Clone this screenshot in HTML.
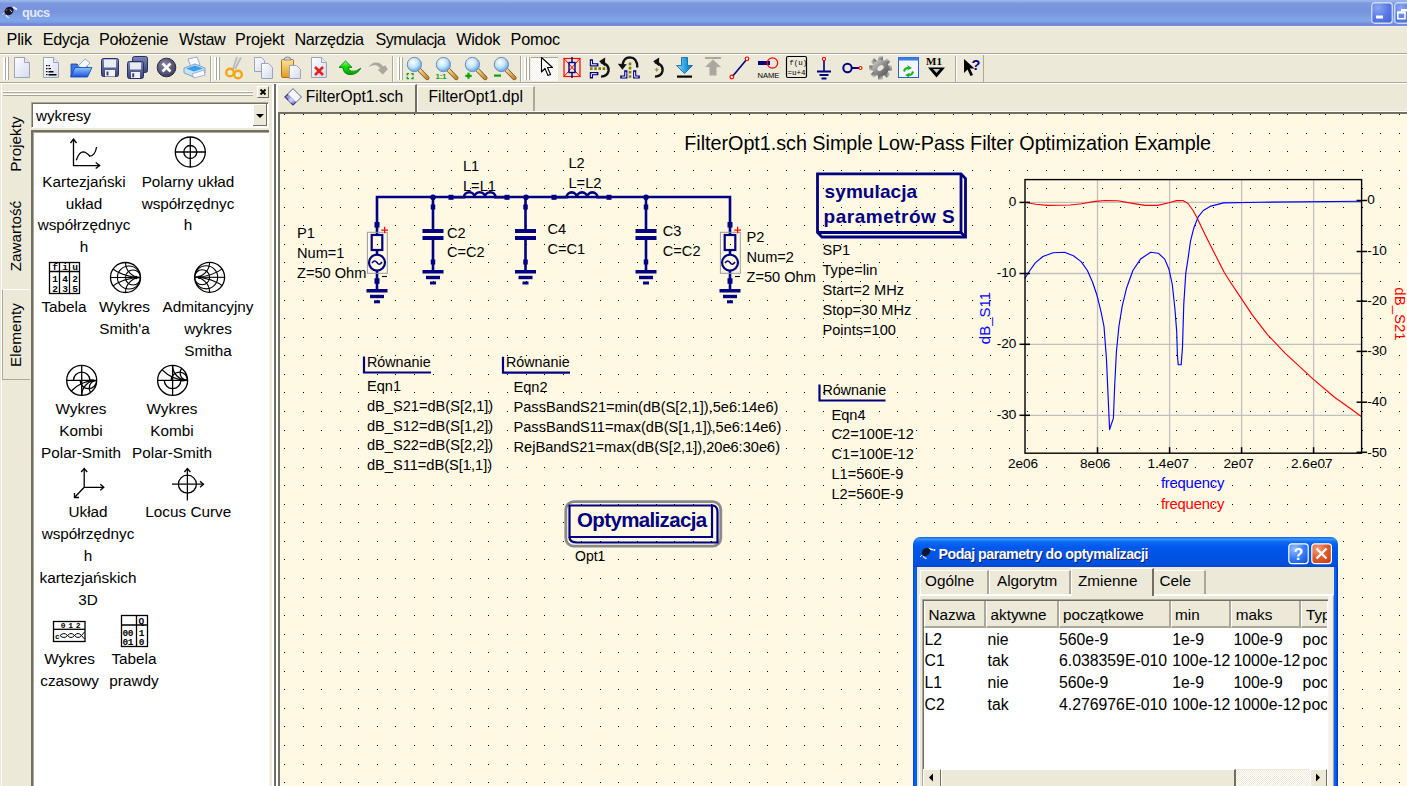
<!DOCTYPE html>
<html><head><meta charset="utf-8"><title>qucs</title>
<style>
html,body{margin:0;padding:0;}
body{width:1407px;height:786px;overflow:hidden;position:relative;background:#ECE9D8;font-family:"Liberation Sans", sans-serif;}
.t{position:absolute;white-space:pre;line-height:1;}
.r{position:absolute;}
svg{position:absolute;overflow:visible;}
</style></head><body>
<div class="r" style="left:0px;top:0px;width:1407px;height:26px;background:linear-gradient(to bottom,#97B0E8 0px,#9DB8EA 1px,#86A6E6 2px,#7A96DF 4px,#7994DE 12px,#7C9EE3 16px,#80A7E7 20px,#7F9EE4 22px,#7089DA 24px,#6E88D8 26px);"></div><svg style="left:0;top:0" width="20" height="26" viewBox="0 0 20 26">
<path d="M2.5 14.5 L6 11" stroke="#E8ECF8" stroke-width="1"/>
<path d="M13 7 L17 9.5" stroke="#F0F0F8" stroke-width="1.5"/>
<ellipse cx="9" cy="11" rx="4.8" ry="4" fill="#15152a" transform="rotate(-35 9 11)"/>
<path d="M6 15 Q7.5 18 9 17.5" stroke="#E8ECF8" stroke-width="1.3" fill="none"/>
<circle cx="6.5" cy="10" r="0.9" fill="#c03030"/>
<path d="M10 9.5 L12 12" stroke="#d8dcf0" stroke-width="1"/>
</svg><div class="t" style="left:22.1px;top:7.3px;font-size:12.8px;color:#E2E8F6;font-weight:bold;letter-spacing:-0.584px">qucs</div><svg style="left:1371px;top:2px" width="22" height="22" viewBox="0 0 22 22">
<defs><radialGradient id="tbg1371" cx="0.3" cy="0.25" r="0.9"><stop offset="0" stop-color="#8CA6EE"/><stop offset="0.55" stop-color="#5A7BE6"/><stop offset="1" stop-color="#4668D8"/></radialGradient></defs>
<rect x="0.75" y="0.75" width="20.5" height="20.5" rx="3" fill="url(#tbg1371)" stroke="#D0DAF4" stroke-width="1.3"/><rect x="5" y="13.5" width="7" height="3" fill="#fff"/></svg><svg style="left:1394px;top:2px" width="22" height="22" viewBox="0 0 22 22">
<defs><radialGradient id="tbg1394" cx="0.3" cy="0.25" r="0.9"><stop offset="0" stop-color="#8CA6EE"/><stop offset="0.55" stop-color="#5A7BE6"/><stop offset="1" stop-color="#4668D8"/></radialGradient></defs>
<rect x="0.75" y="0.75" width="20.5" height="20.5" rx="3" fill="url(#tbg1394)" stroke="#D0DAF4" stroke-width="1.3"/><rect x="7" y="7" width="9" height="2.3" fill="#fff"/><rect x="3.8" y="10.2" width="7.2" height="6.5" fill="none" stroke="#fff" stroke-width="1.6"/><rect x="3.2" y="9.6" width="8.2" height="2" fill="#fff"/></svg><div class="r" style="left:0px;top:26px;width:1407px;height:1px;background:#F4F1E2;"></div><div class="t" style="left:6.5px;top:31.4px;font-size:16.2px;color:#000;letter-spacing:-0.163px">Plik</div><div class="t" style="left:42.7px;top:31.4px;font-size:16.2px;color:#000;letter-spacing:-0.357px">Edycja</div><div class="t" style="left:99.0px;top:31.4px;font-size:16.2px;color:#000;letter-spacing:-0.212px">Położenie</div><div class="t" style="left:179.0px;top:31.4px;font-size:16.2px;color:#000;letter-spacing:-0.468px">Wstaw</div><div class="t" style="left:235.0px;top:31.4px;font-size:16.2px;color:#000;letter-spacing:-0.147px">Projekt</div><div class="t" style="left:294.6px;top:31.4px;font-size:16.2px;color:#000;letter-spacing:-0.422px">Narzędzia</div><div class="t" style="left:375.6px;top:31.4px;font-size:16.2px;color:#000;letter-spacing:-0.571px">Symulacja</div><div class="t" style="left:456.2px;top:31.4px;font-size:16.2px;color:#000;letter-spacing:-0.22px">Widok</div><div class="t" style="left:510.6px;top:31.4px;font-size:16.2px;color:#000;letter-spacing:-0.197px">Pomoc</div><div class="r" style="left:0px;top:53px;width:1407px;height:1px;background:#ACA899;"></div><div class="r" style="left:0px;top:54px;width:1407px;height:1px;background:#FFFFFF;"></div><div class="r" style="left:0px;top:82px;width:1407px;height:1px;background:#ACA899;"></div><div class="r" style="left:0px;top:83px;width:1407px;height:1px;background:#FFFFFF;"></div><div class="r" style="left:210px;top:56px;width:1px;height:26px;background:#ACA899;"></div><div class="r" style="left:211px;top:56px;width:1px;height:26px;background:#FFFFFF;"></div><div class="r" style="left:392px;top:56px;width:1px;height:26px;background:#ACA899;"></div><div class="r" style="left:393px;top:56px;width:1px;height:26px;background:#FFFFFF;"></div><div class="r" style="left:520px;top:56px;width:1px;height:26px;background:#ACA899;"></div><div class="r" style="left:521px;top:56px;width:1px;height:26px;background:#FFFFFF;"></div><div class="r" style="left:955px;top:56px;width:1px;height:26px;background:#ACA899;"></div><div class="r" style="left:956px;top:56px;width:1px;height:26px;background:#FFFFFF;"></div><div class="r" style="left:983px;top:55px;width:1px;height:27px;background:#ACA899;"></div><div class="r" style="left:3px;top:57px;width:2px;height:23px;background:#FFFFFF;"></div><div class="r" style="left:5px;top:57px;width:1px;height:23px;background:#ACA899;"></div><div class="r" style="left:6px;top:57px;width:2px;height:23px;background:#FFFFFF;"></div><div class="r" style="left:8px;top:57px;width:1px;height:23px;background:#ACA899;"></div><div class="r" style="left:214px;top:57px;width:2px;height:23px;background:#FFFFFF;"></div><div class="r" style="left:216px;top:57px;width:1px;height:23px;background:#ACA899;"></div><div class="r" style="left:217px;top:57px;width:2px;height:23px;background:#FFFFFF;"></div><div class="r" style="left:219px;top:57px;width:1px;height:23px;background:#ACA899;"></div><div class="r" style="left:397px;top:57px;width:2px;height:23px;background:#FFFFFF;"></div><div class="r" style="left:399px;top:57px;width:1px;height:23px;background:#ACA899;"></div><div class="r" style="left:400px;top:57px;width:2px;height:23px;background:#FFFFFF;"></div><div class="r" style="left:402px;top:57px;width:1px;height:23px;background:#ACA899;"></div><div class="r" style="left:524px;top:57px;width:2px;height:23px;background:#FFFFFF;"></div><div class="r" style="left:526px;top:57px;width:1px;height:23px;background:#ACA899;"></div><div class="r" style="left:527px;top:57px;width:2px;height:23px;background:#FFFFFF;"></div><div class="r" style="left:529px;top:57px;width:1px;height:23px;background:#ACA899;"></div><svg style="left:0;top:0" width="0" height="0"><defs>
<linearGradient id="gpaper" x1="0" y1="0" x2="1" y2="1"><stop offset="0" stop-color="#FFFFFF"/><stop offset="1" stop-color="#D4DAEC"/></linearGradient>
<linearGradient id="gfold" x1="0" y1="0" x2="0" y2="1"><stop offset="0" stop-color="#8EC8FF"/><stop offset="1" stop-color="#1A50D8"/></linearGradient>
<linearGradient id="gdisk" x1="0" y1="0" x2="0" y2="1"><stop offset="0" stop-color="#7A86B8"/><stop offset="1" stop-color="#3A4478"/></linearGradient>
<radialGradient id="glens" cx="0.4" cy="0.35" r="0.6"><stop offset="0" stop-color="#FFFFFF"/><stop offset="0.6" stop-color="#BFE2FA"/><stop offset="1" stop-color="#6FB0E8"/></radialGradient>
<linearGradient id="ghandle" x1="0" y1="0" x2="1" y2="1"><stop offset="0" stop-color="#F8D890"/><stop offset="1" stop-color="#C88A20"/></linearGradient>
<linearGradient id="gclip" x1="0" y1="0" x2="0" y2="1"><stop offset="0" stop-color="#FBE49A"/><stop offset="1" stop-color="#E09A20"/></linearGradient>
<radialGradient id="gclose" cx="0.4" cy="0.35" r="0.7"><stop offset="0" stop-color="#8A8AA8"/><stop offset="1" stop-color="#3A3A58"/></radialGradient>
<linearGradient id="gdown" x1="0" y1="0" x2="1" y2="0"><stop offset="0" stop-color="#9AE0FF"/><stop offset="0.5" stop-color="#2AA8E8"/><stop offset="1" stop-color="#0870B8"/></linearGradient>
<linearGradient id="ggear" x1="0" y1="0" x2="1" y2="1"><stop offset="0" stop-color="#D8D8D8"/><stop offset="0.5" stop-color="#8A8A8A"/><stop offset="1" stop-color="#505050"/></linearGradient>
</defs></svg><svg style="left:13px;top:56px" width="24" height="24" viewBox="0 0 24 24"><path d="M1.5 1.5 H11.5 L16.5 6.5 V21.5 H1.5 Z" fill="url(#gpaper)" stroke="#9CA4BC" stroke-width="1"/><path d="M11.5 1.5 V6.5 H16.5" fill="#E4E8F4" stroke="#9CA4BC" stroke-width="1"/></svg><svg style="left:42px;top:56px" width="24" height="24" viewBox="0 0 24 24"><path d="M1.5 1.5 H11.5 L16.5 6.5 V21.5 H1.5 Z" fill="url(#gpaper)" stroke="#9CA4BC" stroke-width="1"/><path d="M11.5 1.5 V6.5 H16.5" fill="#E4E8F4" stroke="#9CA4BC" stroke-width="1"/><g fill="#000"><rect x="4" y="9" width="1.5" height="1.2"/><rect x="6.5" y="9" width="1.5" height="1.2"/><rect x="4" y="12" width="1.5" height="1.2"/><rect x="6.5" y="12" width="2.5" height="1.2"/><rect x="4" y="15" width="1.5" height="1.2"/><rect x="6.5" y="15" width="5" height="1.5"/><rect x="4" y="18" width="1.5" height="1.2"/><rect x="6.5" y="18" width="8" height="1.5"/></g></svg><svg style="left:69px;top:56px" width="24" height="24" viewBox="0 0 24 24"><path d="M2 8 H8 L10 10 H18 V20 H2 Z" fill="#3A78E0" stroke="#1A40A0" stroke-width="0.8"/><path d="M9 10 L16 3 L21 7 L15 13 Z" fill="#F4F6FC" stroke="#8090B0" stroke-width="0.7"/><path d="M1.5 21 L6 11.5 H23 L18.5 21 Z" fill="url(#gfold)" stroke="#1040B0" stroke-width="0.8"/></svg><svg style="left:100px;top:56px" width="24" height="24" viewBox="0 0 24 24"><rect x="1.5" y="2.5" width="17" height="18" rx="2" fill="url(#gdisk)" stroke="#2A3060" stroke-width="1"/><rect x="4" y="3.5" width="12" height="8" fill="#E8ECF4"/><rect x="5" y="14" width="10" height="6.5" fill="#F0F2F8"/><rect x="6.5" y="15.5" width="2" height="4" fill="#404870"/></svg><svg style="left:126px;top:56px" width="24" height="24" viewBox="0 0 24 24"><rect x="6.5" y="0.5" width="15" height="16" rx="2" fill="url(#gdisk)" stroke="#2A3060" stroke-width="1"/><rect x="1.5" y="5.5" width="16" height="17" rx="2" fill="url(#gdisk)" stroke="#2A3060" stroke-width="1"/><rect x="4" y="6.5" width="11" height="7" fill="#E8ECF4"/><rect x="5" y="16" width="9" height="6" fill="#F0F2F8"/><rect x="6.2" y="17.3" width="2" height="4" fill="#404870"/></svg><svg style="left:156px;top:56px" width="24" height="24" viewBox="0 0 24 24"><circle cx="10.5" cy="11.5" r="9.3" fill="url(#gclose)" stroke="#2A2A40" stroke-width="1"/><path d="M6.5 7.5 L14.5 15.5 M14.5 7.5 L6.5 15.5" stroke="#FFFFFF" stroke-width="2.6"/></svg><svg style="left:183px;top:56px" width="24" height="24" viewBox="0 0 24 24"><path d="M5 3 L14 1 L17 9 L8 11 Z" fill="#F8FAFF" stroke="#8898C0" stroke-width="0.8"/><path d="M1 12 L12 8 L22 12 V17 L11 21 L1 17 Z" fill="#C8E0F8" stroke="#6890C8" stroke-width="0.8"/><path d="M3 12.5 L12 9.5 L20 12.5 L11 15.5 Z" fill="#38A0E8"/><path d="M9 18 L21 14 L22 19 L11 22 Z" fill="#F8FAFF" stroke="#8898C0" stroke-width="0.7"/></svg><svg style="left:225px;top:56px" width="24" height="24" viewBox="0 0 24 24"><path d="M10 13 L16 1.5 M8 13 L12 1" stroke="#B8B8C8" stroke-width="1.8"/><circle cx="5" cy="16.5" r="3.8" fill="none" stroke="#F0A818" stroke-width="2.4"/><circle cx="13" cy="18.5" r="3.8" fill="none" stroke="#F0A818" stroke-width="2.4"/></svg><svg style="left:253px;top:56px" width="24" height="24" viewBox="0 0 24 24"><path d="M1.5 1.5 H8.5 L11.5 4.5 V15.5 H1.5 Z" fill="url(#gpaper)" stroke="#9CA4BC"/><path d="M8.5 7.5 H15.5 L19.5 11.5 V22.5 H8.5 Z" fill="url(#gpaper)" stroke="#9CA4BC"/></svg><svg style="left:280px;top:56px" width="24" height="24" viewBox="0 0 24 24"><rect x="1.5" y="3.5" width="12" height="18" rx="1" fill="url(#gclip)" stroke="#B07010"/><path d="M4 4 Q4 1 7.5 1 Q11 1 11 4 Z" fill="#D8D8E0" stroke="#888"/><path d="M9.5 9.5 H16.5 L20.5 13.5 V22.5 H9.5 Z" fill="url(#gpaper)" stroke="#9CA4BC"/></svg><svg style="left:310px;top:56px" width="24" height="24" viewBox="0 0 24 24"><path d="M1.5 1.5 H11.5 L16.5 6.5 V21.5 H1.5 Z" fill="url(#gpaper)" stroke="#9CA4BC" stroke-width="1"/><path d="M11.5 1.5 V6.5 H16.5" fill="#E4E8F4" stroke="#9CA4BC" stroke-width="1"/><path d="M5 11 L13 19 M13 11 L5 19" stroke="#E82020" stroke-width="2.6"/></svg><svg style="left:338px;top:56px" width="24" height="24" viewBox="0 0 24 24"><defs><linearGradient id="gundo" x1="0" y1="0" x2="0" y2="1"><stop offset="0" stop-color="#90FF90"/><stop offset="0.4" stop-color="#10E010"/><stop offset="1" stop-color="#00A000"/></linearGradient></defs><path d="M7.6 5 L1 11.4 H4.8 Q5.5 18.8 13 18.6 Q19.5 18 22.8 12.2 Q18 16.2 13.5 15.2 Q10.5 14.5 10.2 11.4 H14 Z" fill="url(#gundo)" stroke="#008000" stroke-width="0.9" stroke-linejoin="round"/></svg><svg style="left:366px;top:56px" width="24" height="24" viewBox="0 0 24 24"><path d="M1.4 12 Q6 5 12 6.3 Q15.5 7 17 10 L19.5 9 L22.2 13.3 L16.8 19 L11 13.5 L13.8 12.5 Q12 9.5 9 9.5 Q5 9.6 1.4 12 Z" fill="#ACA899" stroke="#FFFFFF" stroke-width="0.5"/></svg><svg style="left:406px;top:56px" width="24" height="24" viewBox="0 0 24 24"><path d="M13.8 14.3 L21.3 22" stroke="#7A5A30" stroke-width="4.4" stroke-linecap="round"/><path d="M13.8 14.3 L21.3 22" stroke="url(#ghandle)" stroke-width="2.8" stroke-linecap="round"/><circle cx="8.4" cy="8.5" r="7.1" fill="url(#glens)" stroke="#7088B8" stroke-width="1"/><path d="M1.2 19.5 V17.6 H3 M5.2 17.6 H7 V19.5 M7 20.8 V22.6 H5.2 M3 22.6 H1.2 V20.8" stroke="#10A010" stroke-width="1.3" fill="none"/></svg><svg style="left:435px;top:56px" width="24" height="24" viewBox="0 0 24 24"><path d="M13.8 14.3 L21.3 22" stroke="#7A5A30" stroke-width="4.4" stroke-linecap="round"/><path d="M13.8 14.3 L21.3 22" stroke="url(#ghandle)" stroke-width="2.8" stroke-linecap="round"/><circle cx="8.4" cy="8.5" r="7.1" fill="url(#glens)" stroke="#7088B8" stroke-width="1"/><text x="0.5" y="23" font-family="Liberation Sans" font-weight="bold" font-size="8" fill="#10A010" letter-spacing="-0.3">1:1</text></svg><svg style="left:464px;top:56px" width="24" height="24" viewBox="0 0 24 24"><path d="M13.8 14.3 L21.3 22" stroke="#7A5A30" stroke-width="4.4" stroke-linecap="round"/><path d="M13.8 14.3 L21.3 22" stroke="url(#ghandle)" stroke-width="2.8" stroke-linecap="round"/><circle cx="8.4" cy="8.5" r="7.1" fill="url(#glens)" stroke="#7088B8" stroke-width="1"/><path d="M4.5 16.8 V22.8 M1.3 19.8 H7.7" stroke="#10A010" stroke-width="2.3"/></svg><svg style="left:493px;top:56px" width="24" height="24" viewBox="0 0 24 24"><path d="M13.8 14.3 L21.3 22" stroke="#7A5A30" stroke-width="4.4" stroke-linecap="round"/><path d="M13.8 14.3 L21.3 22" stroke="url(#ghandle)" stroke-width="2.8" stroke-linecap="round"/><circle cx="8.4" cy="8.5" r="7.1" fill="url(#glens)" stroke="#7088B8" stroke-width="1"/><path d="M1 19.6 H8" stroke="#10A010" stroke-width="2.2"/></svg><div class="r" style="left:531px;top:57px;width:27px;height:24px;background:repeating-conic-gradient(#F4F2EA 0 25%, #FFFFFF 0 50%) 0 0/2px 2px;"></div><div class="r" style="left:531px;top:57px;width:27px;height:1px;background:#ACA899;"></div><svg style="left:539px;top:56px" width="24" height="24" viewBox="0 0 24 24"><path d="M2.5 1.5 L2.5 16 L6 12.5 L9 19.5 L11.5 18.5 L8.5 11.5 L13.5 11.5 Z" fill="#FFFFFF" stroke="#000" stroke-width="1.1" stroke-linejoin="round"/></svg><svg style="left:563px;top:56px" width="24" height="24" viewBox="0 0 24 24"><rect x="1" y="2.5" width="16" height="18" fill="none" stroke="#FF0000" stroke-width="1.2"/><path d="M1 2.5 L17 20.5 M17 2.5 L1 20.5" stroke="#FF0000" stroke-width="1"/><rect x="6" y="6.5" width="6" height="10" fill="none" stroke="#000080" stroke-width="1.4"/><path d="M9 1 V6.5 M9 16.5 V22" stroke="#000080" stroke-width="1.4"/></svg><svg style="left:586px;top:56px" width="24" height="24" viewBox="0 0 24 24"><path d="M5.4 4.8 V8.8 H10.8" fill="none" stroke="#000080" stroke-width="3.2" stroke-linecap="square"/><path d="M5.4 4.8 V8.8 H10.8" fill="none" stroke="#FFFFFF" stroke-width="1"/><path d="M5.4 21 V17.7 H10.8" fill="none" stroke="#000080" stroke-width="3.2" stroke-linecap="square"/><path d="M5.4 21 V17.7 H10.8" fill="none" stroke="#FFFFFF" stroke-width="1"/><path d="M4 12.6 H21" stroke="#808000" stroke-width="2.6" stroke-dasharray="2.6 1.6"/><path d="M14.8 6.2 Q23.5 8.5 22.5 15 Q21.5 20.3 15 20.6" fill="none" stroke="#111" stroke-width="2.4"/><path d="M13.2 5.3 L19.2 1.5 L18.8 10.2 Z" fill="#111"/></svg><svg style="left:617px;top:56px" width="24" height="24" viewBox="0 0 24 24"><path d="M4.8 21 H8.8 V15.8" fill="none" stroke="#000080" stroke-width="3.2" stroke-linecap="square"/><path d="M4.8 21 H8.8 V15.8" fill="none" stroke="#FFFFFF" stroke-width="1"/><path d="M17.7 15.8 V21 H21.2" fill="none" stroke="#000080" stroke-width="3.2" stroke-linecap="square"/><path d="M17.7 15.8 V21 H21.2" fill="none" stroke="#FFFFFF" stroke-width="1"/><path d="M13 6.6 V22.4" stroke="#808000" stroke-width="2.6" stroke-dasharray="2.6 1.6"/><path d="M20.3 11.4 Q20.3 1.6 12.6 1.4 Q7 1.4 5.6 8.5" fill="none" stroke="#111" stroke-width="2.4"/><path d="M5.4 13.8 L0.8 7.8 L9.8 8.2 Z" fill="#111"/></svg><svg style="left:651px;top:56px" width="24" height="24" viewBox="0 0 24 24"><path d="M3.8 6.2 Q12.5 8.5 11.5 15 Q10.5 20.3 4 20.6" fill="none" stroke="#111" stroke-width="2.4"/><path d="M2.2 5.3 L8.2 1.5 L7.8 10.2 Z" fill="#111"/><path d="M5.7 11.3 L6.5 13 L8.2 13.8 L6.5 14.6 L5.7 16.3 L4.9 14.6 L3.2 13.8 L4.9 13 Z" fill="#A09040"/></svg><svg style="left:675px;top:56px" width="24" height="24" viewBox="0 0 24 24"><path d="M6.5 1.5 H12.5 V9.5 H17.5 L9.5 17.5 L1.5 9.5 H6.5 Z" fill="url(#gdown)" stroke="#0860A0" stroke-width="0.8"/><rect x="2" y="19.5" width="15" height="2.2" fill="#000"/></svg><svg style="left:704px;top:56px" width="24" height="24" viewBox="0 0 24 24"><rect x="1" y="1" width="16" height="2" fill="#A8A89C"/><path d="M9 3.5 L17 11 H12.5 V19.5 H5.5 V11 H1 Z" fill="#A8A89C" stroke="#C8C8C0" stroke-width="0.5"/></svg><svg style="left:729px;top:56px" width="24" height="24" viewBox="0 0 24 24"><path d="M3 21 L18 3" stroke="#000080" stroke-width="1.6"/><circle cx="2.8" cy="21" r="1.8" fill="#fff" stroke="#FF0000" stroke-width="1.2"/><circle cx="18" cy="2.8" r="1.8" fill="#fff" stroke="#FF0000" stroke-width="1.2"/></svg><svg style="left:757px;top:56px" width="24" height="24" viewBox="0 0 24 24"><rect x="1" y="5" width="12" height="4" fill="#000080"/><circle cx="15.5" cy="7" r="5.2" fill="none" stroke="#FF0000" stroke-width="1.2"/><text x="0.5" y="21.8" font-family="Liberation Sans" font-size="7.6" fill="#000">NAME</text></svg><svg style="left:785px;top:56px" width="24" height="24" viewBox="0 0 24 24"><rect x="1.5" y="0.5" width="20" height="21" rx="1.5" fill="none" stroke="#000" stroke-width="1.2"/><text x="4.2" y="9" font-family="Liberation Mono" font-size="7.5" fill="#000">f(u)</text><text x="2.6" y="18.5" font-family="Liberation Mono" font-size="7.5" fill="#000">=u+4</text></svg><svg style="left:816px;top:56px" width="24" height="24" viewBox="0 0 24 24"><path d="M8 5 V15" stroke="#000080" stroke-width="1.6"/><circle cx="8" cy="3" r="1.6" fill="#fff" stroke="#FF0000" stroke-width="1.1"/><path d="M1 15.5 H15 M3.5 19 H12.5 M5.5 22.5 H10.5" stroke="#000080" stroke-width="1.8"/></svg><svg style="left:842px;top:56px" width="24" height="24" viewBox="0 0 24 24"><circle cx="5.5" cy="12" r="4.2" fill="none" stroke="#000080" stroke-width="2"/><path d="M9.7 12 H17" stroke="#000080" stroke-width="2"/><circle cx="18.5" cy="12" r="1.5" fill="#fff" stroke="#FF0000" stroke-width="1.1"/></svg><svg style="left:869px;top:56px" width="24" height="24" viewBox="0 0 24 24"><rect x="9" y="0.5" width="5" height="5" fill="url(#ggear)" transform="rotate(0 11.5 12)"/><rect x="9" y="0.5" width="5" height="5" fill="url(#ggear)" transform="rotate(45 11.5 12)"/><rect x="9" y="0.5" width="5" height="5" fill="url(#ggear)" transform="rotate(90 11.5 12)"/><rect x="9" y="0.5" width="5" height="5" fill="url(#ggear)" transform="rotate(135 11.5 12)"/><rect x="9" y="0.5" width="5" height="5" fill="url(#ggear)" transform="rotate(180 11.5 12)"/><rect x="9" y="0.5" width="5" height="5" fill="url(#ggear)" transform="rotate(225 11.5 12)"/><rect x="9" y="0.5" width="5" height="5" fill="url(#ggear)" transform="rotate(270 11.5 12)"/><rect x="9" y="0.5" width="5" height="5" fill="url(#ggear)" transform="rotate(315 11.5 12)"/><circle cx="11.5" cy="12" r="8.3" fill="url(#ggear)"/><ellipse cx="11.5" cy="12" rx="3.6" ry="2.3" fill="#ECE9D8" transform="rotate(-40 11.5 12)"/></svg><svg style="left:897px;top:56px" width="24" height="24" viewBox="0 0 24 24"><rect x="1.5" y="1.5" width="20" height="20" fill="#F4F6FC" stroke="#2060D0" stroke-width="1"/><rect x="1.5" y="1.5" width="20" height="3" fill="#3A80E8"/><path d="M6 15 Q7 11 11 11 L10 9 L15 12 L10 14.5 L11 13 Q8.5 13 8 16 Z M17 16 Q16 20 12 20 L13 22 L8 19 L13 16.5 L12 18 Q14.5 18 15 15 Z" fill="#20B020"/></svg><svg style="left:926px;top:56px" width="24" height="24" viewBox="0 0 24 24"><text x="0" y="8.5" font-family="Liberation Serif" font-weight="bold" font-size="11" fill="#000">M1</text><path d="M2 11.5 H19 L10.5 21.5 Z" fill="#000"/><path d="M7 13 H14 L10.5 17 Z" fill="#C8C8C8"/></svg><svg style="left:962px;top:56px" width="24" height="24" viewBox="0 0 24 24"><path d="M2 3 L2 17 L5.5 13.5 L8.5 20 L11 19 L8 12.5 L12.5 12.5 Z" fill="#000"/><text x="9.6" y="14" font-family="Liberation Sans" font-weight="bold" font-size="14.5" fill="#000080">?</text></svg><div class="r" style="left:0px;top:84px;width:275px;height:702px;background:#ECE9D8;"></div><div class="r" style="left:1px;top:84px;width:1px;height:702px;background:#FFFFFF;"></div><div class="r" style="left:3px;top:91px;width:250px;height:1px;background:#FFFFFF;"></div><div class="r" style="left:3px;top:92px;width:250px;height:1px;background:#ACA899;"></div><div class="r" style="left:3px;top:94px;width:250px;height:1px;background:#FFFFFF;"></div><div class="r" style="left:3px;top:95px;width:250px;height:1px;background:#ACA899;"></div><div class="r" style="left:257px;top:86px;width:10px;height:10px;border:1px solid;border-color:#FFFFFF #716F64 #716F64 #FFFFFF;background:#ECE9D8"></div><svg style="left:257px;top:86px" width="12" height="12" viewBox="0 0 12 12"><path d="M3.5 3.5 L8.5 8.5 M8.5 3.5 L3.5 8.5" stroke="#000" stroke-width="1.8"/></svg><div class="r" style="left:271px;top:84px;width:1px;height:702px;background:#ECE9D8;"></div><div class="r" style="left:272px;top:84px;width:2px;height:702px;background:#FFFFFF;"></div><div class="r" style="left:274px;top:84px;width:2px;height:702px;background:#716F64;"></div><div class="r" style="left:276px;top:84px;width:2px;height:702px;background:#FFFFFF;"></div><div class="r" style="left:31px;top:102px;width:236px;height:24px;border:1px solid;border-color:#ACA899 #FFFFFF #FFFFFF #ACA899;background:#FFFFFF;box-shadow:inset 1px 1px 0 #716F64"></div><div class="r" style="left:253px;top:104px;width:14px;height:22px;background:#ECE9D8;box-shadow:inset -1px -1px 0 #716F64, inset 1px 1px 0 #FFFFFF"></div><svg style="left:253px;top:104px" width="15" height="22" viewBox="0 0 15 22"><path d="M3 10 H11 L7 14 Z" fill="#000"/></svg><div class="t" style="left:36.0px;top:107.6px;font-size:15.2px;color:#000">wykresy</div><div class="r" style="left:31px;top:130px;width:238px;height:660px;background:#FFFFFF;border-left:2px solid #716F64;border-top:2px solid #716F64;box-sizing:border-box;box-shadow:inset 1px 1px 0 #ACA899"></div><div class="r" style="left:269px;top:130px;width:1px;height:656px;background:#F4F2E8;"></div><div class="r" style="left:270px;top:130px;width:2px;height:656px;background:#ECE9D8;"></div><div class="r" style="left:2px;top:289px;width:28px;height:91px;background:#ECE9D8;border-left:1px solid #ACA899;border-bottom:1px solid #ACA899;border-top:1px solid #FFFFFF;box-sizing:border-box"></div><div class="t" style="left:16px;top:143.5px;font-size:15.3px;transform:translate(-50%,-50%) rotate(-90deg);">Projekty</div><div class="t" style="left:16px;top:236px;font-size:15.3px;transform:translate(-50%,-50%) rotate(-90deg);">Zawartość</div><div class="t" style="left:16px;top:334.5px;font-size:15.3px;transform:translate(-50%,-50%) rotate(-90deg);">Elementy</div><div class="t" style="left:-16px;width:200px;text-align:center;top:174.0px;font-size:15.3px">Kartezjański</div><div class="t" style="left:-16px;width:200px;text-align:center;top:195.7px;font-size:15.3px">układ</div><div class="t" style="left:-16px;width:200px;text-align:center;top:217.4px;font-size:15.3px">współrzędnyc</div><div class="t" style="left:-16px;width:200px;text-align:center;top:239.1px;font-size:15.3px">h</div><div class="t" style="left:88px;width:200px;text-align:center;top:174.0px;font-size:15.3px">Polarny układ</div><div class="t" style="left:88px;width:200px;text-align:center;top:195.7px;font-size:15.3px">współrzędnyc</div><div class="t" style="left:88px;width:200px;text-align:center;top:217.4px;font-size:15.3px">h</div><div class="t" style="left:-36px;width:200px;text-align:center;top:299.0px;font-size:15.3px">Tabela</div><div class="t" style="left:24.5px;width:200px;text-align:center;top:299.0px;font-size:15.3px">Wykres</div><div class="t" style="left:24.5px;width:200px;text-align:center;top:320.8px;font-size:15.3px">Smith'a</div><div class="t" style="left:108px;width:200px;text-align:center;top:299.0px;font-size:15.3px">Admitancyjny</div><div class="t" style="left:108px;width:200px;text-align:center;top:320.8px;font-size:15.3px">wykres</div><div class="t" style="left:108px;width:200px;text-align:center;top:342.6px;font-size:15.3px">Smitha</div><div class="t" style="left:-19px;width:200px;text-align:center;top:401.2px;font-size:15.3px">Wykres</div><div class="t" style="left:-19px;width:200px;text-align:center;top:423.0px;font-size:15.3px">Kombi</div><div class="t" style="left:-19px;width:200px;text-align:center;top:445.0px;font-size:15.3px">Polar-Smith</div><div class="t" style="left:72px;width:200px;text-align:center;top:401.2px;font-size:15.3px">Wykres</div><div class="t" style="left:72px;width:200px;text-align:center;top:423.0px;font-size:15.3px">Kombi</div><div class="t" style="left:72px;width:200px;text-align:center;top:445.0px;font-size:15.3px">Polar-Smith</div><div class="t" style="left:-12px;width:200px;text-align:center;top:504.4px;font-size:15.3px">Układ</div><div class="t" style="left:-12px;width:200px;text-align:center;top:526.3px;font-size:15.3px">współrzędnyc</div><div class="t" style="left:-12px;width:200px;text-align:center;top:548.2px;font-size:15.3px">h</div><div class="t" style="left:-12px;width:200px;text-align:center;top:570.1px;font-size:15.3px">kartezjańskich</div><div class="t" style="left:-12px;width:200px;text-align:center;top:592.0px;font-size:15.3px">3D</div><div class="t" style="left:88.30000000000001px;width:200px;text-align:center;top:504.4px;font-size:15.3px">Locus Curve</div><div class="t" style="left:-30.400000000000006px;width:200px;text-align:center;top:651.3px;font-size:15.3px">Wykres</div><div class="t" style="left:-30.400000000000006px;width:200px;text-align:center;top:672.8px;font-size:15.3px">czasowy</div><div class="t" style="left:34px;width:200px;text-align:center;top:651.3px;font-size:15.3px">Tabela</div><div class="t" style="left:34px;width:200px;text-align:center;top:672.8px;font-size:15.3px">prawdy</div><svg style="left:0;top:0" width="1407" height="786" viewBox="0 0 1407 786"><path d="M73.5 139 V165.6 H99.7" stroke="#000" stroke-width="1.3" fill="none"/><path d="M70.5 143 L73.5 139 L76.5 143 M95.7 162.6 L99.7 165.6 L95.7 168.6" stroke="#000" stroke-width="1.3" fill="none"/><path d="M76.3 160.3 Q79 152 83.3 151.9 Q86 152 89.8 156.2 Q95 156 96.6 147" stroke="#000" stroke-width="1.3" fill="none" stroke-width="1.6"/><circle cx="190.3" cy="152" r="15" stroke="#000" stroke-width="1.3" fill="none"/><circle cx="190.3" cy="152" r="6.5" stroke="#000" stroke-width="1.3" fill="none"/><path d="M175.3 152 H205.3 M190.3 137 V167" stroke="#000" stroke-width="1.3" fill="none"/><g font-family="Liberation Mono" font-size="9.5" font-weight="bold" fill="#000"><rect x="49.5" y="262.5" width="30" height="31" stroke="#000" stroke-width="1.3" fill="none"/><path d="M59.5 262.5 V293.5 M69.5 262.5 V293.5 M49.5 271.5 H79.5" stroke="#000" stroke-width="1.3" fill="none"/><text x="52.2" y="270.0">f</text><text x="62.2" y="270.0">i</text><text x="72.2" y="270.0">u</text><text x="52.2" y="281.5">1</text><text x="62.2" y="281.5">4</text><text x="72.2" y="281.5">2</text><text x="52.2" y="292.0">2</text><text x="62.2" y="292.0">3</text><text x="72.2" y="292.0">5</text></g><clipPath id="cl125277"><circle cx="125.5" cy="277.5" r="15"/></clipPath><circle cx="125.5" cy="277.5" r="15" stroke="#000" stroke-width="1.3" fill="none"/><path d="M110.5 277.5 H140.5" stroke="#000" stroke-width="1.1" fill="none"/><g clip-path="url(#cl125277)"><circle cx="128.95" cy="277.5" r="11.55" stroke="#000" stroke-width="1.1" fill="none"/><circle cx="133.0" cy="277.5" r="7.5" stroke="#000" stroke-width="1.1" fill="none"/><circle cx="140.5" cy="262.5" r="15" stroke="#000" stroke-width="1.1" fill="none"/><circle cx="140.5" cy="292.5" r="15" stroke="#000" stroke-width="1.1" fill="none"/><circle cx="140.5" cy="228.0" r="49.5" stroke="#000" stroke-width="1.1" fill="none"/><circle cx="140.5" cy="327.0" r="49.5" stroke="#000" stroke-width="1.1" fill="none"/></g><rect x="133.8" y="275.9" width="3.2" height="3.2" fill="#000"/><clipPath id="cl209277"><circle cx="209.6" cy="277.3" r="15"/></clipPath><circle cx="209.6" cy="277.3" r="15" stroke="#000" stroke-width="1.3" fill="none"/><path d="M194.6 277.3 H224.6" stroke="#000" stroke-width="1.1" fill="none"/><g clip-path="url(#cl209277)"><circle cx="206.15" cy="277.3" r="11.55" stroke="#000" stroke-width="1.1" fill="none"/><circle cx="202.1" cy="277.3" r="7.5" stroke="#000" stroke-width="1.1" fill="none"/><circle cx="194.6" cy="262.3" r="15" stroke="#000" stroke-width="1.1" fill="none"/><circle cx="194.6" cy="292.3" r="15" stroke="#000" stroke-width="1.1" fill="none"/><circle cx="194.6" cy="227.8" r="49.5" stroke="#000" stroke-width="1.1" fill="none"/><circle cx="194.6" cy="326.8" r="49.5" stroke="#000" stroke-width="1.1" fill="none"/></g><rect x="198.1" y="275.7" width="3.2" height="3.2" fill="#000"/><clipPath id="cc81"><path d="M66.7 380.4 A15 15 0 0 0 96.7 380.4 Z"/></clipPath><clipPath id="cd81"><path d="M66.7 380.4 A15 15 0 0 1 96.7 380.4 Z"/></clipPath><circle cx="81.7" cy="380.4" r="15" stroke="#000" stroke-width="1.3" fill="none"/><path d="M66.7 380.4 H96.7 M81.7 365.4 V395.4" stroke="#000" stroke-width="1.3" fill="none"/><circle cx="81.7" cy="380.4" r="8.25" stroke="#000" stroke-width="1.3" fill="none" clip-path="url(#cd81)"/><g clip-path="url(#cc81)"><circle cx="88.45" cy="380.4" r="8.25" stroke="#000" stroke-width="1.3" fill="none"/><circle cx="96.7" cy="395.4" r="15" stroke="#000" stroke-width="1.3" fill="none"/><circle cx="96.7" cy="416.4" r="36.0" stroke="#000" stroke-width="1.3" fill="none"/><circle cx="96.7" cy="387.9" r="7.5" stroke="#000" stroke-width="1.3" fill="none"/></g><path d="M89.2 380.4 H93.7" stroke="#000" stroke-width="2"/><clipPath id="cc172"><path d="M157.6 380.4 A15 15 0 0 1 187.6 380.4 Z"/></clipPath><clipPath id="cd172"><path d="M157.6 380.4 A15 15 0 0 0 187.6 380.4 Z"/></clipPath><circle cx="172.6" cy="380.4" r="15" stroke="#000" stroke-width="1.3" fill="none"/><path d="M157.6 380.4 H187.6 M172.6 365.4 V395.4" stroke="#000" stroke-width="1.3" fill="none"/><circle cx="172.6" cy="380.4" r="8.25" stroke="#000" stroke-width="1.3" fill="none" clip-path="url(#cd172)"/><g clip-path="url(#cc172)"><circle cx="179.35" cy="380.4" r="8.25" stroke="#000" stroke-width="1.3" fill="none"/><circle cx="187.6" cy="365.4" r="15" stroke="#000" stroke-width="1.3" fill="none"/><circle cx="187.6" cy="344.4" r="36.0" stroke="#000" stroke-width="1.3" fill="none"/><circle cx="187.6" cy="372.9" r="7.5" stroke="#000" stroke-width="1.3" fill="none"/></g><path d="M180.1 380.4 H184.6" stroke="#000" stroke-width="2"/><path d="M84.2 468.5 V487.3 H103.8 M84.2 487.3 L74.5 497.5" stroke="#000" stroke-width="1.3" fill="none"/><path d="M81.2 472 L84.2 468.5 L87.2 472 M100.3 484.3 L103.8 487.3 L100.3 490.3 M74.5 493 V497.5 H79" stroke="#000" stroke-width="1.3" fill="none"/><circle cx="187.4" cy="484.2" r="9" stroke="#000" stroke-width="1.3" fill="none"/><path d="M172 484.2 H203.5 M187.4 468.5 V500.5" stroke="#000" stroke-width="1.3" fill="none"/><path d="M184.4 472 L187.4 468.5 L190.4 472 M200 481.2 L203.5 484.2 L200 487.2" stroke="#000" stroke-width="1.3" fill="none"/><rect x="53.5" y="621.5" width="31.5" height="20" stroke="#000" stroke-width="1.3" fill="none"/><path d="M53.5 629.3 H85" stroke="#000" stroke-width="1.3" fill="none"/><g font-family="Liberation Mono" font-size="8" font-weight="bold" fill="#000"><text x="60.8" y="628.3">0</text><text x="68.3" y="628.3">1</text><text x="75.8" y="628.3">2</text><text x="55" y="639">c</text></g><path d="M60 635.5 Q64 631.5 67.5 635.5 Q71 639.5 74.5 635.5 Q78 631.5 81.5 635.5 L84.5 632 M60 635.5 Q64 639.5 67.5 635.5 Q71 631.5 74.5 635.5 Q78 639.5 81.5 635.5 L84.5 639" stroke="#000" stroke-width="1" fill="none"/><rect x="121.5" y="615.5" width="26" height="31" stroke="#000" stroke-width="1.3" fill="none"/><path d="M136.5 615.5 V646.5 M121.5 625 H147.5" stroke="#000" stroke-width="1.3" fill="none"/><g font-family="Liberation Mono" font-size="9.5" font-weight="bold" fill="#000" letter-spacing="-0.6"><text x="138.6" y="623.8">Q</text><text x="122.6" y="635.5">00</text><text x="122.6" y="645">01</text><text x="138.8" y="635.5">1</text><text x="138.8" y="645">0</text></g></svg><div class="r" style="left:278px;top:84px;width:1129px;height:29px;background:#ECE9D8;"></div><div class="r" style="left:417px;top:86px;width:118px;height:25px;box-sizing:border-box;border-top:1px solid #FFFFFF;border-left:1px solid #FFFFFF;border-right:2px solid #ACA899;background:#ECE9D8"></div><div class="r" style="left:277px;top:84px;width:140px;height:29px;box-sizing:border-box;border-top:1px solid #FFFFFF;border-left:1px solid #FFFFFF;border-right:2px solid #716F64;background:#ECE9D8"></div><svg style="left:284px;top:88px" width="18" height="18" viewBox="0 0 18 18"><path d="M1 9 L9 1 L17 9 L9 17 Z" fill="#9A9AD8" stroke="#3A3A78" stroke-width="1.2"/><path d="M9 1 L17 9 L12 14 L4 6 Z" fill="#F4F4FC"/><path d="M4 12 L7 9 L10 12 L7 15 Z" fill="#C8C8F0"/></svg><div class="t" style="left:305.7px;top:89.0px;font-size:15.6px;color:#000;letter-spacing:0.04px">FilterOpt1.sch</div><div class="t" style="left:428.5px;top:89.0px;font-size:15.6px;color:#000;letter-spacing:0.074px">FilterOpt1.dpl</div><div class="r" style="left:417px;top:111px;width:990px;height:1px;background:#FFFFFF;"></div><div class="r" style="left:278px;top:112px;width:1129px;height:674px;background:#FFF8E3;box-sizing:border-box;border-top:2px solid #716F64;border-left:2px solid #716F64;"></div><svg style="left:0;top:0" width="1407" height="786"><path d="M284 114h1v1h-1zM303 114h1v1h-1zM321 114h1v1h-1zM340 114h1v1h-1zM358 114h1v1h-1zM377 114h1v1h-1zM395 114h1v1h-1zM414 114h1v1h-1zM433 114h1v1h-1zM451 114h1v1h-1zM470 114h1v1h-1zM488 114h1v1h-1zM507 114h1v1h-1zM526 114h1v1h-1zM544 114h1v1h-1zM563 114h1v1h-1zM581 114h1v1h-1zM600 114h1v1h-1zM618 114h1v1h-1zM637 114h1v1h-1zM656 114h1v1h-1zM674 114h1v1h-1zM693 114h1v1h-1zM711 114h1v1h-1zM730 114h1v1h-1zM749 114h1v1h-1zM767 114h1v1h-1zM786 114h1v1h-1zM804 114h1v1h-1zM823 114h1v1h-1zM841 114h1v1h-1zM860 114h1v1h-1zM879 114h1v1h-1zM897 114h1v1h-1zM916 114h1v1h-1zM934 114h1v1h-1zM953 114h1v1h-1zM972 114h1v1h-1zM990 114h1v1h-1zM1009 114h1v1h-1zM1027 114h1v1h-1zM1046 114h1v1h-1zM1064 114h1v1h-1zM1083 114h1v1h-1zM1102 114h1v1h-1zM1120 114h1v1h-1zM1139 114h1v1h-1zM1157 114h1v1h-1zM1176 114h1v1h-1zM1195 114h1v1h-1zM1213 114h1v1h-1zM1232 114h1v1h-1zM1250 114h1v1h-1zM1269 114h1v1h-1zM1287 114h1v1h-1zM1306 114h1v1h-1zM1325 114h1v1h-1zM1343 114h1v1h-1zM1362 114h1v1h-1zM1380 114h1v1h-1zM1399 114h1v1h-1zM284 133h1v1h-1zM303 133h1v1h-1zM321 133h1v1h-1zM340 133h1v1h-1zM358 133h1v1h-1zM377 133h1v1h-1zM395 133h1v1h-1zM414 133h1v1h-1zM433 133h1v1h-1zM451 133h1v1h-1zM470 133h1v1h-1zM488 133h1v1h-1zM507 133h1v1h-1zM526 133h1v1h-1zM544 133h1v1h-1zM563 133h1v1h-1zM581 133h1v1h-1zM600 133h1v1h-1zM618 133h1v1h-1zM637 133h1v1h-1zM656 133h1v1h-1zM674 133h1v1h-1zM693 133h1v1h-1zM711 133h1v1h-1zM730 133h1v1h-1zM749 133h1v1h-1zM767 133h1v1h-1zM786 133h1v1h-1zM804 133h1v1h-1zM823 133h1v1h-1zM841 133h1v1h-1zM860 133h1v1h-1zM879 133h1v1h-1zM897 133h1v1h-1zM916 133h1v1h-1zM934 133h1v1h-1zM953 133h1v1h-1zM972 133h1v1h-1zM990 133h1v1h-1zM1009 133h1v1h-1zM1027 133h1v1h-1zM1046 133h1v1h-1zM1064 133h1v1h-1zM1083 133h1v1h-1zM1102 133h1v1h-1zM1120 133h1v1h-1zM1139 133h1v1h-1zM1157 133h1v1h-1zM1176 133h1v1h-1zM1195 133h1v1h-1zM1213 133h1v1h-1zM1232 133h1v1h-1zM1250 133h1v1h-1zM1269 133h1v1h-1zM1287 133h1v1h-1zM1306 133h1v1h-1zM1325 133h1v1h-1zM1343 133h1v1h-1zM1362 133h1v1h-1zM1380 133h1v1h-1zM1399 133h1v1h-1zM284 151h1v1h-1zM303 151h1v1h-1zM321 151h1v1h-1zM340 151h1v1h-1zM358 151h1v1h-1zM377 151h1v1h-1zM395 151h1v1h-1zM414 151h1v1h-1zM433 151h1v1h-1zM451 151h1v1h-1zM470 151h1v1h-1zM488 151h1v1h-1zM507 151h1v1h-1zM526 151h1v1h-1zM544 151h1v1h-1zM563 151h1v1h-1zM581 151h1v1h-1zM600 151h1v1h-1zM618 151h1v1h-1zM637 151h1v1h-1zM656 151h1v1h-1zM674 151h1v1h-1zM693 151h1v1h-1zM711 151h1v1h-1zM730 151h1v1h-1zM749 151h1v1h-1zM767 151h1v1h-1zM786 151h1v1h-1zM804 151h1v1h-1zM823 151h1v1h-1zM841 151h1v1h-1zM860 151h1v1h-1zM879 151h1v1h-1zM897 151h1v1h-1zM916 151h1v1h-1zM934 151h1v1h-1zM953 151h1v1h-1zM972 151h1v1h-1zM990 151h1v1h-1zM1009 151h1v1h-1zM1027 151h1v1h-1zM1046 151h1v1h-1zM1064 151h1v1h-1zM1083 151h1v1h-1zM1102 151h1v1h-1zM1120 151h1v1h-1zM1139 151h1v1h-1zM1157 151h1v1h-1zM1176 151h1v1h-1zM1195 151h1v1h-1zM1213 151h1v1h-1zM1232 151h1v1h-1zM1250 151h1v1h-1zM1269 151h1v1h-1zM1287 151h1v1h-1zM1306 151h1v1h-1zM1325 151h1v1h-1zM1343 151h1v1h-1zM1362 151h1v1h-1zM1380 151h1v1h-1zM1399 151h1v1h-1zM284 170h1v1h-1zM303 170h1v1h-1zM321 170h1v1h-1zM340 170h1v1h-1zM358 170h1v1h-1zM377 170h1v1h-1zM395 170h1v1h-1zM414 170h1v1h-1zM433 170h1v1h-1zM451 170h1v1h-1zM470 170h1v1h-1zM488 170h1v1h-1zM507 170h1v1h-1zM526 170h1v1h-1zM544 170h1v1h-1zM563 170h1v1h-1zM581 170h1v1h-1zM600 170h1v1h-1zM618 170h1v1h-1zM637 170h1v1h-1zM656 170h1v1h-1zM674 170h1v1h-1zM693 170h1v1h-1zM711 170h1v1h-1zM730 170h1v1h-1zM749 170h1v1h-1zM767 170h1v1h-1zM786 170h1v1h-1zM804 170h1v1h-1zM823 170h1v1h-1zM841 170h1v1h-1zM860 170h1v1h-1zM879 170h1v1h-1zM897 170h1v1h-1zM916 170h1v1h-1zM934 170h1v1h-1zM953 170h1v1h-1zM972 170h1v1h-1zM990 170h1v1h-1zM1009 170h1v1h-1zM1027 170h1v1h-1zM1046 170h1v1h-1zM1064 170h1v1h-1zM1083 170h1v1h-1zM1102 170h1v1h-1zM1120 170h1v1h-1zM1139 170h1v1h-1zM1157 170h1v1h-1zM1176 170h1v1h-1zM1195 170h1v1h-1zM1213 170h1v1h-1zM1232 170h1v1h-1zM1250 170h1v1h-1zM1269 170h1v1h-1zM1287 170h1v1h-1zM1306 170h1v1h-1zM1325 170h1v1h-1zM1343 170h1v1h-1zM1362 170h1v1h-1zM1380 170h1v1h-1zM1399 170h1v1h-1zM284 188h1v1h-1zM303 188h1v1h-1zM321 188h1v1h-1zM340 188h1v1h-1zM358 188h1v1h-1zM377 188h1v1h-1zM395 188h1v1h-1zM414 188h1v1h-1zM433 188h1v1h-1zM451 188h1v1h-1zM470 188h1v1h-1zM488 188h1v1h-1zM507 188h1v1h-1zM526 188h1v1h-1zM544 188h1v1h-1zM563 188h1v1h-1zM581 188h1v1h-1zM600 188h1v1h-1zM618 188h1v1h-1zM637 188h1v1h-1zM656 188h1v1h-1zM674 188h1v1h-1zM693 188h1v1h-1zM711 188h1v1h-1zM730 188h1v1h-1zM749 188h1v1h-1zM767 188h1v1h-1zM786 188h1v1h-1zM804 188h1v1h-1zM823 188h1v1h-1zM841 188h1v1h-1zM860 188h1v1h-1zM879 188h1v1h-1zM897 188h1v1h-1zM916 188h1v1h-1zM934 188h1v1h-1zM953 188h1v1h-1zM972 188h1v1h-1zM990 188h1v1h-1zM1009 188h1v1h-1zM1027 188h1v1h-1zM1046 188h1v1h-1zM1064 188h1v1h-1zM1083 188h1v1h-1zM1102 188h1v1h-1zM1120 188h1v1h-1zM1139 188h1v1h-1zM1157 188h1v1h-1zM1176 188h1v1h-1zM1195 188h1v1h-1zM1213 188h1v1h-1zM1232 188h1v1h-1zM1250 188h1v1h-1zM1269 188h1v1h-1zM1287 188h1v1h-1zM1306 188h1v1h-1zM1325 188h1v1h-1zM1343 188h1v1h-1zM1362 188h1v1h-1zM1380 188h1v1h-1zM1399 188h1v1h-1zM284 207h1v1h-1zM303 207h1v1h-1zM321 207h1v1h-1zM340 207h1v1h-1zM358 207h1v1h-1zM377 207h1v1h-1zM395 207h1v1h-1zM414 207h1v1h-1zM433 207h1v1h-1zM451 207h1v1h-1zM470 207h1v1h-1zM488 207h1v1h-1zM507 207h1v1h-1zM526 207h1v1h-1zM544 207h1v1h-1zM563 207h1v1h-1zM581 207h1v1h-1zM600 207h1v1h-1zM618 207h1v1h-1zM637 207h1v1h-1zM656 207h1v1h-1zM674 207h1v1h-1zM693 207h1v1h-1zM711 207h1v1h-1zM730 207h1v1h-1zM749 207h1v1h-1zM767 207h1v1h-1zM786 207h1v1h-1zM804 207h1v1h-1zM823 207h1v1h-1zM841 207h1v1h-1zM860 207h1v1h-1zM879 207h1v1h-1zM897 207h1v1h-1zM916 207h1v1h-1zM934 207h1v1h-1zM953 207h1v1h-1zM972 207h1v1h-1zM990 207h1v1h-1zM1009 207h1v1h-1zM1027 207h1v1h-1zM1046 207h1v1h-1zM1064 207h1v1h-1zM1083 207h1v1h-1zM1102 207h1v1h-1zM1120 207h1v1h-1zM1139 207h1v1h-1zM1157 207h1v1h-1zM1176 207h1v1h-1zM1195 207h1v1h-1zM1213 207h1v1h-1zM1232 207h1v1h-1zM1250 207h1v1h-1zM1269 207h1v1h-1zM1287 207h1v1h-1zM1306 207h1v1h-1zM1325 207h1v1h-1zM1343 207h1v1h-1zM1362 207h1v1h-1zM1380 207h1v1h-1zM1399 207h1v1h-1zM284 225h1v1h-1zM303 225h1v1h-1zM321 225h1v1h-1zM340 225h1v1h-1zM358 225h1v1h-1zM377 225h1v1h-1zM395 225h1v1h-1zM414 225h1v1h-1zM433 225h1v1h-1zM451 225h1v1h-1zM470 225h1v1h-1zM488 225h1v1h-1zM507 225h1v1h-1zM526 225h1v1h-1zM544 225h1v1h-1zM563 225h1v1h-1zM581 225h1v1h-1zM600 225h1v1h-1zM618 225h1v1h-1zM637 225h1v1h-1zM656 225h1v1h-1zM674 225h1v1h-1zM693 225h1v1h-1zM711 225h1v1h-1zM730 225h1v1h-1zM749 225h1v1h-1zM767 225h1v1h-1zM786 225h1v1h-1zM804 225h1v1h-1zM823 225h1v1h-1zM841 225h1v1h-1zM860 225h1v1h-1zM879 225h1v1h-1zM897 225h1v1h-1zM916 225h1v1h-1zM934 225h1v1h-1zM953 225h1v1h-1zM972 225h1v1h-1zM990 225h1v1h-1zM1009 225h1v1h-1zM1027 225h1v1h-1zM1046 225h1v1h-1zM1064 225h1v1h-1zM1083 225h1v1h-1zM1102 225h1v1h-1zM1120 225h1v1h-1zM1139 225h1v1h-1zM1157 225h1v1h-1zM1176 225h1v1h-1zM1195 225h1v1h-1zM1213 225h1v1h-1zM1232 225h1v1h-1zM1250 225h1v1h-1zM1269 225h1v1h-1zM1287 225h1v1h-1zM1306 225h1v1h-1zM1325 225h1v1h-1zM1343 225h1v1h-1zM1362 225h1v1h-1zM1380 225h1v1h-1zM1399 225h1v1h-1zM284 244h1v1h-1zM303 244h1v1h-1zM321 244h1v1h-1zM340 244h1v1h-1zM358 244h1v1h-1zM377 244h1v1h-1zM395 244h1v1h-1zM414 244h1v1h-1zM433 244h1v1h-1zM451 244h1v1h-1zM470 244h1v1h-1zM488 244h1v1h-1zM507 244h1v1h-1zM526 244h1v1h-1zM544 244h1v1h-1zM563 244h1v1h-1zM581 244h1v1h-1zM600 244h1v1h-1zM618 244h1v1h-1zM637 244h1v1h-1zM656 244h1v1h-1zM674 244h1v1h-1zM693 244h1v1h-1zM711 244h1v1h-1zM730 244h1v1h-1zM749 244h1v1h-1zM767 244h1v1h-1zM786 244h1v1h-1zM804 244h1v1h-1zM823 244h1v1h-1zM841 244h1v1h-1zM860 244h1v1h-1zM879 244h1v1h-1zM897 244h1v1h-1zM916 244h1v1h-1zM934 244h1v1h-1zM953 244h1v1h-1zM972 244h1v1h-1zM990 244h1v1h-1zM1009 244h1v1h-1zM1027 244h1v1h-1zM1046 244h1v1h-1zM1064 244h1v1h-1zM1083 244h1v1h-1zM1102 244h1v1h-1zM1120 244h1v1h-1zM1139 244h1v1h-1zM1157 244h1v1h-1zM1176 244h1v1h-1zM1195 244h1v1h-1zM1213 244h1v1h-1zM1232 244h1v1h-1zM1250 244h1v1h-1zM1269 244h1v1h-1zM1287 244h1v1h-1zM1306 244h1v1h-1zM1325 244h1v1h-1zM1343 244h1v1h-1zM1362 244h1v1h-1zM1380 244h1v1h-1zM1399 244h1v1h-1zM284 262h1v1h-1zM303 262h1v1h-1zM321 262h1v1h-1zM340 262h1v1h-1zM358 262h1v1h-1zM377 262h1v1h-1zM395 262h1v1h-1zM414 262h1v1h-1zM433 262h1v1h-1zM451 262h1v1h-1zM470 262h1v1h-1zM488 262h1v1h-1zM507 262h1v1h-1zM526 262h1v1h-1zM544 262h1v1h-1zM563 262h1v1h-1zM581 262h1v1h-1zM600 262h1v1h-1zM618 262h1v1h-1zM637 262h1v1h-1zM656 262h1v1h-1zM674 262h1v1h-1zM693 262h1v1h-1zM711 262h1v1h-1zM730 262h1v1h-1zM749 262h1v1h-1zM767 262h1v1h-1zM786 262h1v1h-1zM804 262h1v1h-1zM823 262h1v1h-1zM841 262h1v1h-1zM860 262h1v1h-1zM879 262h1v1h-1zM897 262h1v1h-1zM916 262h1v1h-1zM934 262h1v1h-1zM953 262h1v1h-1zM972 262h1v1h-1zM990 262h1v1h-1zM1009 262h1v1h-1zM1027 262h1v1h-1zM1046 262h1v1h-1zM1064 262h1v1h-1zM1083 262h1v1h-1zM1102 262h1v1h-1zM1120 262h1v1h-1zM1139 262h1v1h-1zM1157 262h1v1h-1zM1176 262h1v1h-1zM1195 262h1v1h-1zM1213 262h1v1h-1zM1232 262h1v1h-1zM1250 262h1v1h-1zM1269 262h1v1h-1zM1287 262h1v1h-1zM1306 262h1v1h-1zM1325 262h1v1h-1zM1343 262h1v1h-1zM1362 262h1v1h-1zM1380 262h1v1h-1zM1399 262h1v1h-1zM284 281h1v1h-1zM303 281h1v1h-1zM321 281h1v1h-1zM340 281h1v1h-1zM358 281h1v1h-1zM377 281h1v1h-1zM395 281h1v1h-1zM414 281h1v1h-1zM433 281h1v1h-1zM451 281h1v1h-1zM470 281h1v1h-1zM488 281h1v1h-1zM507 281h1v1h-1zM526 281h1v1h-1zM544 281h1v1h-1zM563 281h1v1h-1zM581 281h1v1h-1zM600 281h1v1h-1zM618 281h1v1h-1zM637 281h1v1h-1zM656 281h1v1h-1zM674 281h1v1h-1zM693 281h1v1h-1zM711 281h1v1h-1zM730 281h1v1h-1zM749 281h1v1h-1zM767 281h1v1h-1zM786 281h1v1h-1zM804 281h1v1h-1zM823 281h1v1h-1zM841 281h1v1h-1zM860 281h1v1h-1zM879 281h1v1h-1zM897 281h1v1h-1zM916 281h1v1h-1zM934 281h1v1h-1zM953 281h1v1h-1zM972 281h1v1h-1zM990 281h1v1h-1zM1009 281h1v1h-1zM1027 281h1v1h-1zM1046 281h1v1h-1zM1064 281h1v1h-1zM1083 281h1v1h-1zM1102 281h1v1h-1zM1120 281h1v1h-1zM1139 281h1v1h-1zM1157 281h1v1h-1zM1176 281h1v1h-1zM1195 281h1v1h-1zM1213 281h1v1h-1zM1232 281h1v1h-1zM1250 281h1v1h-1zM1269 281h1v1h-1zM1287 281h1v1h-1zM1306 281h1v1h-1zM1325 281h1v1h-1zM1343 281h1v1h-1zM1362 281h1v1h-1zM1380 281h1v1h-1zM1399 281h1v1h-1zM284 300h1v1h-1zM303 300h1v1h-1zM321 300h1v1h-1zM340 300h1v1h-1zM358 300h1v1h-1zM377 300h1v1h-1zM395 300h1v1h-1zM414 300h1v1h-1zM433 300h1v1h-1zM451 300h1v1h-1zM470 300h1v1h-1zM488 300h1v1h-1zM507 300h1v1h-1zM526 300h1v1h-1zM544 300h1v1h-1zM563 300h1v1h-1zM581 300h1v1h-1zM600 300h1v1h-1zM618 300h1v1h-1zM637 300h1v1h-1zM656 300h1v1h-1zM674 300h1v1h-1zM693 300h1v1h-1zM711 300h1v1h-1zM730 300h1v1h-1zM749 300h1v1h-1zM767 300h1v1h-1zM786 300h1v1h-1zM804 300h1v1h-1zM823 300h1v1h-1zM841 300h1v1h-1zM860 300h1v1h-1zM879 300h1v1h-1zM897 300h1v1h-1zM916 300h1v1h-1zM934 300h1v1h-1zM953 300h1v1h-1zM972 300h1v1h-1zM990 300h1v1h-1zM1009 300h1v1h-1zM1027 300h1v1h-1zM1046 300h1v1h-1zM1064 300h1v1h-1zM1083 300h1v1h-1zM1102 300h1v1h-1zM1120 300h1v1h-1zM1139 300h1v1h-1zM1157 300h1v1h-1zM1176 300h1v1h-1zM1195 300h1v1h-1zM1213 300h1v1h-1zM1232 300h1v1h-1zM1250 300h1v1h-1zM1269 300h1v1h-1zM1287 300h1v1h-1zM1306 300h1v1h-1zM1325 300h1v1h-1zM1343 300h1v1h-1zM1362 300h1v1h-1zM1380 300h1v1h-1zM1399 300h1v1h-1zM284 318h1v1h-1zM303 318h1v1h-1zM321 318h1v1h-1zM340 318h1v1h-1zM358 318h1v1h-1zM377 318h1v1h-1zM395 318h1v1h-1zM414 318h1v1h-1zM433 318h1v1h-1zM451 318h1v1h-1zM470 318h1v1h-1zM488 318h1v1h-1zM507 318h1v1h-1zM526 318h1v1h-1zM544 318h1v1h-1zM563 318h1v1h-1zM581 318h1v1h-1zM600 318h1v1h-1zM618 318h1v1h-1zM637 318h1v1h-1zM656 318h1v1h-1zM674 318h1v1h-1zM693 318h1v1h-1zM711 318h1v1h-1zM730 318h1v1h-1zM749 318h1v1h-1zM767 318h1v1h-1zM786 318h1v1h-1zM804 318h1v1h-1zM823 318h1v1h-1zM841 318h1v1h-1zM860 318h1v1h-1zM879 318h1v1h-1zM897 318h1v1h-1zM916 318h1v1h-1zM934 318h1v1h-1zM953 318h1v1h-1zM972 318h1v1h-1zM990 318h1v1h-1zM1009 318h1v1h-1zM1027 318h1v1h-1zM1046 318h1v1h-1zM1064 318h1v1h-1zM1083 318h1v1h-1zM1102 318h1v1h-1zM1120 318h1v1h-1zM1139 318h1v1h-1zM1157 318h1v1h-1zM1176 318h1v1h-1zM1195 318h1v1h-1zM1213 318h1v1h-1zM1232 318h1v1h-1zM1250 318h1v1h-1zM1269 318h1v1h-1zM1287 318h1v1h-1zM1306 318h1v1h-1zM1325 318h1v1h-1zM1343 318h1v1h-1zM1362 318h1v1h-1zM1380 318h1v1h-1zM1399 318h1v1h-1zM284 337h1v1h-1zM303 337h1v1h-1zM321 337h1v1h-1zM340 337h1v1h-1zM358 337h1v1h-1zM377 337h1v1h-1zM395 337h1v1h-1zM414 337h1v1h-1zM433 337h1v1h-1zM451 337h1v1h-1zM470 337h1v1h-1zM488 337h1v1h-1zM507 337h1v1h-1zM526 337h1v1h-1zM544 337h1v1h-1zM563 337h1v1h-1zM581 337h1v1h-1zM600 337h1v1h-1zM618 337h1v1h-1zM637 337h1v1h-1zM656 337h1v1h-1zM674 337h1v1h-1zM693 337h1v1h-1zM711 337h1v1h-1zM730 337h1v1h-1zM749 337h1v1h-1zM767 337h1v1h-1zM786 337h1v1h-1zM804 337h1v1h-1zM823 337h1v1h-1zM841 337h1v1h-1zM860 337h1v1h-1zM879 337h1v1h-1zM897 337h1v1h-1zM916 337h1v1h-1zM934 337h1v1h-1zM953 337h1v1h-1zM972 337h1v1h-1zM990 337h1v1h-1zM1009 337h1v1h-1zM1027 337h1v1h-1zM1046 337h1v1h-1zM1064 337h1v1h-1zM1083 337h1v1h-1zM1102 337h1v1h-1zM1120 337h1v1h-1zM1139 337h1v1h-1zM1157 337h1v1h-1zM1176 337h1v1h-1zM1195 337h1v1h-1zM1213 337h1v1h-1zM1232 337h1v1h-1zM1250 337h1v1h-1zM1269 337h1v1h-1zM1287 337h1v1h-1zM1306 337h1v1h-1zM1325 337h1v1h-1zM1343 337h1v1h-1zM1362 337h1v1h-1zM1380 337h1v1h-1zM1399 337h1v1h-1zM284 355h1v1h-1zM303 355h1v1h-1zM321 355h1v1h-1zM340 355h1v1h-1zM358 355h1v1h-1zM377 355h1v1h-1zM395 355h1v1h-1zM414 355h1v1h-1zM433 355h1v1h-1zM451 355h1v1h-1zM470 355h1v1h-1zM488 355h1v1h-1zM507 355h1v1h-1zM526 355h1v1h-1zM544 355h1v1h-1zM563 355h1v1h-1zM581 355h1v1h-1zM600 355h1v1h-1zM618 355h1v1h-1zM637 355h1v1h-1zM656 355h1v1h-1zM674 355h1v1h-1zM693 355h1v1h-1zM711 355h1v1h-1zM730 355h1v1h-1zM749 355h1v1h-1zM767 355h1v1h-1zM786 355h1v1h-1zM804 355h1v1h-1zM823 355h1v1h-1zM841 355h1v1h-1zM860 355h1v1h-1zM879 355h1v1h-1zM897 355h1v1h-1zM916 355h1v1h-1zM934 355h1v1h-1zM953 355h1v1h-1zM972 355h1v1h-1zM990 355h1v1h-1zM1009 355h1v1h-1zM1027 355h1v1h-1zM1046 355h1v1h-1zM1064 355h1v1h-1zM1083 355h1v1h-1zM1102 355h1v1h-1zM1120 355h1v1h-1zM1139 355h1v1h-1zM1157 355h1v1h-1zM1176 355h1v1h-1zM1195 355h1v1h-1zM1213 355h1v1h-1zM1232 355h1v1h-1zM1250 355h1v1h-1zM1269 355h1v1h-1zM1287 355h1v1h-1zM1306 355h1v1h-1zM1325 355h1v1h-1zM1343 355h1v1h-1zM1362 355h1v1h-1zM1380 355h1v1h-1zM1399 355h1v1h-1zM284 374h1v1h-1zM303 374h1v1h-1zM321 374h1v1h-1zM340 374h1v1h-1zM358 374h1v1h-1zM377 374h1v1h-1zM395 374h1v1h-1zM414 374h1v1h-1zM433 374h1v1h-1zM451 374h1v1h-1zM470 374h1v1h-1zM488 374h1v1h-1zM507 374h1v1h-1zM526 374h1v1h-1zM544 374h1v1h-1zM563 374h1v1h-1zM581 374h1v1h-1zM600 374h1v1h-1zM618 374h1v1h-1zM637 374h1v1h-1zM656 374h1v1h-1zM674 374h1v1h-1zM693 374h1v1h-1zM711 374h1v1h-1zM730 374h1v1h-1zM749 374h1v1h-1zM767 374h1v1h-1zM786 374h1v1h-1zM804 374h1v1h-1zM823 374h1v1h-1zM841 374h1v1h-1zM860 374h1v1h-1zM879 374h1v1h-1zM897 374h1v1h-1zM916 374h1v1h-1zM934 374h1v1h-1zM953 374h1v1h-1zM972 374h1v1h-1zM990 374h1v1h-1zM1009 374h1v1h-1zM1027 374h1v1h-1zM1046 374h1v1h-1zM1064 374h1v1h-1zM1083 374h1v1h-1zM1102 374h1v1h-1zM1120 374h1v1h-1zM1139 374h1v1h-1zM1157 374h1v1h-1zM1176 374h1v1h-1zM1195 374h1v1h-1zM1213 374h1v1h-1zM1232 374h1v1h-1zM1250 374h1v1h-1zM1269 374h1v1h-1zM1287 374h1v1h-1zM1306 374h1v1h-1zM1325 374h1v1h-1zM1343 374h1v1h-1zM1362 374h1v1h-1zM1380 374h1v1h-1zM1399 374h1v1h-1zM284 392h1v1h-1zM303 392h1v1h-1zM321 392h1v1h-1zM340 392h1v1h-1zM358 392h1v1h-1zM377 392h1v1h-1zM395 392h1v1h-1zM414 392h1v1h-1zM433 392h1v1h-1zM451 392h1v1h-1zM470 392h1v1h-1zM488 392h1v1h-1zM507 392h1v1h-1zM526 392h1v1h-1zM544 392h1v1h-1zM563 392h1v1h-1zM581 392h1v1h-1zM600 392h1v1h-1zM618 392h1v1h-1zM637 392h1v1h-1zM656 392h1v1h-1zM674 392h1v1h-1zM693 392h1v1h-1zM711 392h1v1h-1zM730 392h1v1h-1zM749 392h1v1h-1zM767 392h1v1h-1zM786 392h1v1h-1zM804 392h1v1h-1zM823 392h1v1h-1zM841 392h1v1h-1zM860 392h1v1h-1zM879 392h1v1h-1zM897 392h1v1h-1zM916 392h1v1h-1zM934 392h1v1h-1zM953 392h1v1h-1zM972 392h1v1h-1zM990 392h1v1h-1zM1009 392h1v1h-1zM1027 392h1v1h-1zM1046 392h1v1h-1zM1064 392h1v1h-1zM1083 392h1v1h-1zM1102 392h1v1h-1zM1120 392h1v1h-1zM1139 392h1v1h-1zM1157 392h1v1h-1zM1176 392h1v1h-1zM1195 392h1v1h-1zM1213 392h1v1h-1zM1232 392h1v1h-1zM1250 392h1v1h-1zM1269 392h1v1h-1zM1287 392h1v1h-1zM1306 392h1v1h-1zM1325 392h1v1h-1zM1343 392h1v1h-1zM1362 392h1v1h-1zM1380 392h1v1h-1zM1399 392h1v1h-1zM284 411h1v1h-1zM303 411h1v1h-1zM321 411h1v1h-1zM340 411h1v1h-1zM358 411h1v1h-1zM377 411h1v1h-1zM395 411h1v1h-1zM414 411h1v1h-1zM433 411h1v1h-1zM451 411h1v1h-1zM470 411h1v1h-1zM488 411h1v1h-1zM507 411h1v1h-1zM526 411h1v1h-1zM544 411h1v1h-1zM563 411h1v1h-1zM581 411h1v1h-1zM600 411h1v1h-1zM618 411h1v1h-1zM637 411h1v1h-1zM656 411h1v1h-1zM674 411h1v1h-1zM693 411h1v1h-1zM711 411h1v1h-1zM730 411h1v1h-1zM749 411h1v1h-1zM767 411h1v1h-1zM786 411h1v1h-1zM804 411h1v1h-1zM823 411h1v1h-1zM841 411h1v1h-1zM860 411h1v1h-1zM879 411h1v1h-1zM897 411h1v1h-1zM916 411h1v1h-1zM934 411h1v1h-1zM953 411h1v1h-1zM972 411h1v1h-1zM990 411h1v1h-1zM1009 411h1v1h-1zM1027 411h1v1h-1zM1046 411h1v1h-1zM1064 411h1v1h-1zM1083 411h1v1h-1zM1102 411h1v1h-1zM1120 411h1v1h-1zM1139 411h1v1h-1zM1157 411h1v1h-1zM1176 411h1v1h-1zM1195 411h1v1h-1zM1213 411h1v1h-1zM1232 411h1v1h-1zM1250 411h1v1h-1zM1269 411h1v1h-1zM1287 411h1v1h-1zM1306 411h1v1h-1zM1325 411h1v1h-1zM1343 411h1v1h-1zM1362 411h1v1h-1zM1380 411h1v1h-1zM1399 411h1v1h-1zM284 430h1v1h-1zM303 430h1v1h-1zM321 430h1v1h-1zM340 430h1v1h-1zM358 430h1v1h-1zM377 430h1v1h-1zM395 430h1v1h-1zM414 430h1v1h-1zM433 430h1v1h-1zM451 430h1v1h-1zM470 430h1v1h-1zM488 430h1v1h-1zM507 430h1v1h-1zM526 430h1v1h-1zM544 430h1v1h-1zM563 430h1v1h-1zM581 430h1v1h-1zM600 430h1v1h-1zM618 430h1v1h-1zM637 430h1v1h-1zM656 430h1v1h-1zM674 430h1v1h-1zM693 430h1v1h-1zM711 430h1v1h-1zM730 430h1v1h-1zM749 430h1v1h-1zM767 430h1v1h-1zM786 430h1v1h-1zM804 430h1v1h-1zM823 430h1v1h-1zM841 430h1v1h-1zM860 430h1v1h-1zM879 430h1v1h-1zM897 430h1v1h-1zM916 430h1v1h-1zM934 430h1v1h-1zM953 430h1v1h-1zM972 430h1v1h-1zM990 430h1v1h-1zM1009 430h1v1h-1zM1027 430h1v1h-1zM1046 430h1v1h-1zM1064 430h1v1h-1zM1083 430h1v1h-1zM1102 430h1v1h-1zM1120 430h1v1h-1zM1139 430h1v1h-1zM1157 430h1v1h-1zM1176 430h1v1h-1zM1195 430h1v1h-1zM1213 430h1v1h-1zM1232 430h1v1h-1zM1250 430h1v1h-1zM1269 430h1v1h-1zM1287 430h1v1h-1zM1306 430h1v1h-1zM1325 430h1v1h-1zM1343 430h1v1h-1zM1362 430h1v1h-1zM1380 430h1v1h-1zM1399 430h1v1h-1zM284 448h1v1h-1zM303 448h1v1h-1zM321 448h1v1h-1zM340 448h1v1h-1zM358 448h1v1h-1zM377 448h1v1h-1zM395 448h1v1h-1zM414 448h1v1h-1zM433 448h1v1h-1zM451 448h1v1h-1zM470 448h1v1h-1zM488 448h1v1h-1zM507 448h1v1h-1zM526 448h1v1h-1zM544 448h1v1h-1zM563 448h1v1h-1zM581 448h1v1h-1zM600 448h1v1h-1zM618 448h1v1h-1zM637 448h1v1h-1zM656 448h1v1h-1zM674 448h1v1h-1zM693 448h1v1h-1zM711 448h1v1h-1zM730 448h1v1h-1zM749 448h1v1h-1zM767 448h1v1h-1zM786 448h1v1h-1zM804 448h1v1h-1zM823 448h1v1h-1zM841 448h1v1h-1zM860 448h1v1h-1zM879 448h1v1h-1zM897 448h1v1h-1zM916 448h1v1h-1zM934 448h1v1h-1zM953 448h1v1h-1zM972 448h1v1h-1zM990 448h1v1h-1zM1009 448h1v1h-1zM1027 448h1v1h-1zM1046 448h1v1h-1zM1064 448h1v1h-1zM1083 448h1v1h-1zM1102 448h1v1h-1zM1120 448h1v1h-1zM1139 448h1v1h-1zM1157 448h1v1h-1zM1176 448h1v1h-1zM1195 448h1v1h-1zM1213 448h1v1h-1zM1232 448h1v1h-1zM1250 448h1v1h-1zM1269 448h1v1h-1zM1287 448h1v1h-1zM1306 448h1v1h-1zM1325 448h1v1h-1zM1343 448h1v1h-1zM1362 448h1v1h-1zM1380 448h1v1h-1zM1399 448h1v1h-1zM284 467h1v1h-1zM303 467h1v1h-1zM321 467h1v1h-1zM340 467h1v1h-1zM358 467h1v1h-1zM377 467h1v1h-1zM395 467h1v1h-1zM414 467h1v1h-1zM433 467h1v1h-1zM451 467h1v1h-1zM470 467h1v1h-1zM488 467h1v1h-1zM507 467h1v1h-1zM526 467h1v1h-1zM544 467h1v1h-1zM563 467h1v1h-1zM581 467h1v1h-1zM600 467h1v1h-1zM618 467h1v1h-1zM637 467h1v1h-1zM656 467h1v1h-1zM674 467h1v1h-1zM693 467h1v1h-1zM711 467h1v1h-1zM730 467h1v1h-1zM749 467h1v1h-1zM767 467h1v1h-1zM786 467h1v1h-1zM804 467h1v1h-1zM823 467h1v1h-1zM841 467h1v1h-1zM860 467h1v1h-1zM879 467h1v1h-1zM897 467h1v1h-1zM916 467h1v1h-1zM934 467h1v1h-1zM953 467h1v1h-1zM972 467h1v1h-1zM990 467h1v1h-1zM1009 467h1v1h-1zM1027 467h1v1h-1zM1046 467h1v1h-1zM1064 467h1v1h-1zM1083 467h1v1h-1zM1102 467h1v1h-1zM1120 467h1v1h-1zM1139 467h1v1h-1zM1157 467h1v1h-1zM1176 467h1v1h-1zM1195 467h1v1h-1zM1213 467h1v1h-1zM1232 467h1v1h-1zM1250 467h1v1h-1zM1269 467h1v1h-1zM1287 467h1v1h-1zM1306 467h1v1h-1zM1325 467h1v1h-1zM1343 467h1v1h-1zM1362 467h1v1h-1zM1380 467h1v1h-1zM1399 467h1v1h-1zM284 485h1v1h-1zM303 485h1v1h-1zM321 485h1v1h-1zM340 485h1v1h-1zM358 485h1v1h-1zM377 485h1v1h-1zM395 485h1v1h-1zM414 485h1v1h-1zM433 485h1v1h-1zM451 485h1v1h-1zM470 485h1v1h-1zM488 485h1v1h-1zM507 485h1v1h-1zM526 485h1v1h-1zM544 485h1v1h-1zM563 485h1v1h-1zM581 485h1v1h-1zM600 485h1v1h-1zM618 485h1v1h-1zM637 485h1v1h-1zM656 485h1v1h-1zM674 485h1v1h-1zM693 485h1v1h-1zM711 485h1v1h-1zM730 485h1v1h-1zM749 485h1v1h-1zM767 485h1v1h-1zM786 485h1v1h-1zM804 485h1v1h-1zM823 485h1v1h-1zM841 485h1v1h-1zM860 485h1v1h-1zM879 485h1v1h-1zM897 485h1v1h-1zM916 485h1v1h-1zM934 485h1v1h-1zM953 485h1v1h-1zM972 485h1v1h-1zM990 485h1v1h-1zM1009 485h1v1h-1zM1027 485h1v1h-1zM1046 485h1v1h-1zM1064 485h1v1h-1zM1083 485h1v1h-1zM1102 485h1v1h-1zM1120 485h1v1h-1zM1139 485h1v1h-1zM1157 485h1v1h-1zM1176 485h1v1h-1zM1195 485h1v1h-1zM1213 485h1v1h-1zM1232 485h1v1h-1zM1250 485h1v1h-1zM1269 485h1v1h-1zM1287 485h1v1h-1zM1306 485h1v1h-1zM1325 485h1v1h-1zM1343 485h1v1h-1zM1362 485h1v1h-1zM1380 485h1v1h-1zM1399 485h1v1h-1zM284 504h1v1h-1zM303 504h1v1h-1zM321 504h1v1h-1zM340 504h1v1h-1zM358 504h1v1h-1zM377 504h1v1h-1zM395 504h1v1h-1zM414 504h1v1h-1zM433 504h1v1h-1zM451 504h1v1h-1zM470 504h1v1h-1zM488 504h1v1h-1zM507 504h1v1h-1zM526 504h1v1h-1zM544 504h1v1h-1zM563 504h1v1h-1zM581 504h1v1h-1zM600 504h1v1h-1zM618 504h1v1h-1zM637 504h1v1h-1zM656 504h1v1h-1zM674 504h1v1h-1zM693 504h1v1h-1zM711 504h1v1h-1zM730 504h1v1h-1zM749 504h1v1h-1zM767 504h1v1h-1zM786 504h1v1h-1zM804 504h1v1h-1zM823 504h1v1h-1zM841 504h1v1h-1zM860 504h1v1h-1zM879 504h1v1h-1zM897 504h1v1h-1zM916 504h1v1h-1zM934 504h1v1h-1zM953 504h1v1h-1zM972 504h1v1h-1zM990 504h1v1h-1zM1009 504h1v1h-1zM1027 504h1v1h-1zM1046 504h1v1h-1zM1064 504h1v1h-1zM1083 504h1v1h-1zM1102 504h1v1h-1zM1120 504h1v1h-1zM1139 504h1v1h-1zM1157 504h1v1h-1zM1176 504h1v1h-1zM1195 504h1v1h-1zM1213 504h1v1h-1zM1232 504h1v1h-1zM1250 504h1v1h-1zM1269 504h1v1h-1zM1287 504h1v1h-1zM1306 504h1v1h-1zM1325 504h1v1h-1zM1343 504h1v1h-1zM1362 504h1v1h-1zM1380 504h1v1h-1zM1399 504h1v1h-1zM284 522h1v1h-1zM303 522h1v1h-1zM321 522h1v1h-1zM340 522h1v1h-1zM358 522h1v1h-1zM377 522h1v1h-1zM395 522h1v1h-1zM414 522h1v1h-1zM433 522h1v1h-1zM451 522h1v1h-1zM470 522h1v1h-1zM488 522h1v1h-1zM507 522h1v1h-1zM526 522h1v1h-1zM544 522h1v1h-1zM563 522h1v1h-1zM581 522h1v1h-1zM600 522h1v1h-1zM618 522h1v1h-1zM637 522h1v1h-1zM656 522h1v1h-1zM674 522h1v1h-1zM693 522h1v1h-1zM711 522h1v1h-1zM730 522h1v1h-1zM749 522h1v1h-1zM767 522h1v1h-1zM786 522h1v1h-1zM804 522h1v1h-1zM823 522h1v1h-1zM841 522h1v1h-1zM860 522h1v1h-1zM879 522h1v1h-1zM897 522h1v1h-1zM916 522h1v1h-1zM934 522h1v1h-1zM953 522h1v1h-1zM972 522h1v1h-1zM990 522h1v1h-1zM1009 522h1v1h-1zM1027 522h1v1h-1zM1046 522h1v1h-1zM1064 522h1v1h-1zM1083 522h1v1h-1zM1102 522h1v1h-1zM1120 522h1v1h-1zM1139 522h1v1h-1zM1157 522h1v1h-1zM1176 522h1v1h-1zM1195 522h1v1h-1zM1213 522h1v1h-1zM1232 522h1v1h-1zM1250 522h1v1h-1zM1269 522h1v1h-1zM1287 522h1v1h-1zM1306 522h1v1h-1zM1325 522h1v1h-1zM1343 522h1v1h-1zM1362 522h1v1h-1zM1380 522h1v1h-1zM1399 522h1v1h-1zM284 541h1v1h-1zM303 541h1v1h-1zM321 541h1v1h-1zM340 541h1v1h-1zM358 541h1v1h-1zM377 541h1v1h-1zM395 541h1v1h-1zM414 541h1v1h-1zM433 541h1v1h-1zM451 541h1v1h-1zM470 541h1v1h-1zM488 541h1v1h-1zM507 541h1v1h-1zM526 541h1v1h-1zM544 541h1v1h-1zM563 541h1v1h-1zM581 541h1v1h-1zM600 541h1v1h-1zM618 541h1v1h-1zM637 541h1v1h-1zM656 541h1v1h-1zM674 541h1v1h-1zM693 541h1v1h-1zM711 541h1v1h-1zM730 541h1v1h-1zM749 541h1v1h-1zM767 541h1v1h-1zM786 541h1v1h-1zM804 541h1v1h-1zM823 541h1v1h-1zM841 541h1v1h-1zM860 541h1v1h-1zM879 541h1v1h-1zM897 541h1v1h-1zM916 541h1v1h-1zM934 541h1v1h-1zM953 541h1v1h-1zM972 541h1v1h-1zM990 541h1v1h-1zM1009 541h1v1h-1zM1027 541h1v1h-1zM1046 541h1v1h-1zM1064 541h1v1h-1zM1083 541h1v1h-1zM1102 541h1v1h-1zM1120 541h1v1h-1zM1139 541h1v1h-1zM1157 541h1v1h-1zM1176 541h1v1h-1zM1195 541h1v1h-1zM1213 541h1v1h-1zM1232 541h1v1h-1zM1250 541h1v1h-1zM1269 541h1v1h-1zM1287 541h1v1h-1zM1306 541h1v1h-1zM1325 541h1v1h-1zM1343 541h1v1h-1zM1362 541h1v1h-1zM1380 541h1v1h-1zM1399 541h1v1h-1zM284 559h1v1h-1zM303 559h1v1h-1zM321 559h1v1h-1zM340 559h1v1h-1zM358 559h1v1h-1zM377 559h1v1h-1zM395 559h1v1h-1zM414 559h1v1h-1zM433 559h1v1h-1zM451 559h1v1h-1zM470 559h1v1h-1zM488 559h1v1h-1zM507 559h1v1h-1zM526 559h1v1h-1zM544 559h1v1h-1zM563 559h1v1h-1zM581 559h1v1h-1zM600 559h1v1h-1zM618 559h1v1h-1zM637 559h1v1h-1zM656 559h1v1h-1zM674 559h1v1h-1zM693 559h1v1h-1zM711 559h1v1h-1zM730 559h1v1h-1zM749 559h1v1h-1zM767 559h1v1h-1zM786 559h1v1h-1zM804 559h1v1h-1zM823 559h1v1h-1zM841 559h1v1h-1zM860 559h1v1h-1zM879 559h1v1h-1zM897 559h1v1h-1zM916 559h1v1h-1zM934 559h1v1h-1zM953 559h1v1h-1zM972 559h1v1h-1zM990 559h1v1h-1zM1009 559h1v1h-1zM1027 559h1v1h-1zM1046 559h1v1h-1zM1064 559h1v1h-1zM1083 559h1v1h-1zM1102 559h1v1h-1zM1120 559h1v1h-1zM1139 559h1v1h-1zM1157 559h1v1h-1zM1176 559h1v1h-1zM1195 559h1v1h-1zM1213 559h1v1h-1zM1232 559h1v1h-1zM1250 559h1v1h-1zM1269 559h1v1h-1zM1287 559h1v1h-1zM1306 559h1v1h-1zM1325 559h1v1h-1zM1343 559h1v1h-1zM1362 559h1v1h-1zM1380 559h1v1h-1zM1399 559h1v1h-1zM284 578h1v1h-1zM303 578h1v1h-1zM321 578h1v1h-1zM340 578h1v1h-1zM358 578h1v1h-1zM377 578h1v1h-1zM395 578h1v1h-1zM414 578h1v1h-1zM433 578h1v1h-1zM451 578h1v1h-1zM470 578h1v1h-1zM488 578h1v1h-1zM507 578h1v1h-1zM526 578h1v1h-1zM544 578h1v1h-1zM563 578h1v1h-1zM581 578h1v1h-1zM600 578h1v1h-1zM618 578h1v1h-1zM637 578h1v1h-1zM656 578h1v1h-1zM674 578h1v1h-1zM693 578h1v1h-1zM711 578h1v1h-1zM730 578h1v1h-1zM749 578h1v1h-1zM767 578h1v1h-1zM786 578h1v1h-1zM804 578h1v1h-1zM823 578h1v1h-1zM841 578h1v1h-1zM860 578h1v1h-1zM879 578h1v1h-1zM897 578h1v1h-1zM916 578h1v1h-1zM934 578h1v1h-1zM953 578h1v1h-1zM972 578h1v1h-1zM990 578h1v1h-1zM1009 578h1v1h-1zM1027 578h1v1h-1zM1046 578h1v1h-1zM1064 578h1v1h-1zM1083 578h1v1h-1zM1102 578h1v1h-1zM1120 578h1v1h-1zM1139 578h1v1h-1zM1157 578h1v1h-1zM1176 578h1v1h-1zM1195 578h1v1h-1zM1213 578h1v1h-1zM1232 578h1v1h-1zM1250 578h1v1h-1zM1269 578h1v1h-1zM1287 578h1v1h-1zM1306 578h1v1h-1zM1325 578h1v1h-1zM1343 578h1v1h-1zM1362 578h1v1h-1zM1380 578h1v1h-1zM1399 578h1v1h-1zM284 597h1v1h-1zM303 597h1v1h-1zM321 597h1v1h-1zM340 597h1v1h-1zM358 597h1v1h-1zM377 597h1v1h-1zM395 597h1v1h-1zM414 597h1v1h-1zM433 597h1v1h-1zM451 597h1v1h-1zM470 597h1v1h-1zM488 597h1v1h-1zM507 597h1v1h-1zM526 597h1v1h-1zM544 597h1v1h-1zM563 597h1v1h-1zM581 597h1v1h-1zM600 597h1v1h-1zM618 597h1v1h-1zM637 597h1v1h-1zM656 597h1v1h-1zM674 597h1v1h-1zM693 597h1v1h-1zM711 597h1v1h-1zM730 597h1v1h-1zM749 597h1v1h-1zM767 597h1v1h-1zM786 597h1v1h-1zM804 597h1v1h-1zM823 597h1v1h-1zM841 597h1v1h-1zM860 597h1v1h-1zM879 597h1v1h-1zM897 597h1v1h-1zM916 597h1v1h-1zM934 597h1v1h-1zM953 597h1v1h-1zM972 597h1v1h-1zM990 597h1v1h-1zM1009 597h1v1h-1zM1027 597h1v1h-1zM1046 597h1v1h-1zM1064 597h1v1h-1zM1083 597h1v1h-1zM1102 597h1v1h-1zM1120 597h1v1h-1zM1139 597h1v1h-1zM1157 597h1v1h-1zM1176 597h1v1h-1zM1195 597h1v1h-1zM1213 597h1v1h-1zM1232 597h1v1h-1zM1250 597h1v1h-1zM1269 597h1v1h-1zM1287 597h1v1h-1zM1306 597h1v1h-1zM1325 597h1v1h-1zM1343 597h1v1h-1zM1362 597h1v1h-1zM1380 597h1v1h-1zM1399 597h1v1h-1zM284 615h1v1h-1zM303 615h1v1h-1zM321 615h1v1h-1zM340 615h1v1h-1zM358 615h1v1h-1zM377 615h1v1h-1zM395 615h1v1h-1zM414 615h1v1h-1zM433 615h1v1h-1zM451 615h1v1h-1zM470 615h1v1h-1zM488 615h1v1h-1zM507 615h1v1h-1zM526 615h1v1h-1zM544 615h1v1h-1zM563 615h1v1h-1zM581 615h1v1h-1zM600 615h1v1h-1zM618 615h1v1h-1zM637 615h1v1h-1zM656 615h1v1h-1zM674 615h1v1h-1zM693 615h1v1h-1zM711 615h1v1h-1zM730 615h1v1h-1zM749 615h1v1h-1zM767 615h1v1h-1zM786 615h1v1h-1zM804 615h1v1h-1zM823 615h1v1h-1zM841 615h1v1h-1zM860 615h1v1h-1zM879 615h1v1h-1zM897 615h1v1h-1zM916 615h1v1h-1zM934 615h1v1h-1zM953 615h1v1h-1zM972 615h1v1h-1zM990 615h1v1h-1zM1009 615h1v1h-1zM1027 615h1v1h-1zM1046 615h1v1h-1zM1064 615h1v1h-1zM1083 615h1v1h-1zM1102 615h1v1h-1zM1120 615h1v1h-1zM1139 615h1v1h-1zM1157 615h1v1h-1zM1176 615h1v1h-1zM1195 615h1v1h-1zM1213 615h1v1h-1zM1232 615h1v1h-1zM1250 615h1v1h-1zM1269 615h1v1h-1zM1287 615h1v1h-1zM1306 615h1v1h-1zM1325 615h1v1h-1zM1343 615h1v1h-1zM1362 615h1v1h-1zM1380 615h1v1h-1zM1399 615h1v1h-1zM284 634h1v1h-1zM303 634h1v1h-1zM321 634h1v1h-1zM340 634h1v1h-1zM358 634h1v1h-1zM377 634h1v1h-1zM395 634h1v1h-1zM414 634h1v1h-1zM433 634h1v1h-1zM451 634h1v1h-1zM470 634h1v1h-1zM488 634h1v1h-1zM507 634h1v1h-1zM526 634h1v1h-1zM544 634h1v1h-1zM563 634h1v1h-1zM581 634h1v1h-1zM600 634h1v1h-1zM618 634h1v1h-1zM637 634h1v1h-1zM656 634h1v1h-1zM674 634h1v1h-1zM693 634h1v1h-1zM711 634h1v1h-1zM730 634h1v1h-1zM749 634h1v1h-1zM767 634h1v1h-1zM786 634h1v1h-1zM804 634h1v1h-1zM823 634h1v1h-1zM841 634h1v1h-1zM860 634h1v1h-1zM879 634h1v1h-1zM897 634h1v1h-1zM916 634h1v1h-1zM934 634h1v1h-1zM953 634h1v1h-1zM972 634h1v1h-1zM990 634h1v1h-1zM1009 634h1v1h-1zM1027 634h1v1h-1zM1046 634h1v1h-1zM1064 634h1v1h-1zM1083 634h1v1h-1zM1102 634h1v1h-1zM1120 634h1v1h-1zM1139 634h1v1h-1zM1157 634h1v1h-1zM1176 634h1v1h-1zM1195 634h1v1h-1zM1213 634h1v1h-1zM1232 634h1v1h-1zM1250 634h1v1h-1zM1269 634h1v1h-1zM1287 634h1v1h-1zM1306 634h1v1h-1zM1325 634h1v1h-1zM1343 634h1v1h-1zM1362 634h1v1h-1zM1380 634h1v1h-1zM1399 634h1v1h-1zM284 652h1v1h-1zM303 652h1v1h-1zM321 652h1v1h-1zM340 652h1v1h-1zM358 652h1v1h-1zM377 652h1v1h-1zM395 652h1v1h-1zM414 652h1v1h-1zM433 652h1v1h-1zM451 652h1v1h-1zM470 652h1v1h-1zM488 652h1v1h-1zM507 652h1v1h-1zM526 652h1v1h-1zM544 652h1v1h-1zM563 652h1v1h-1zM581 652h1v1h-1zM600 652h1v1h-1zM618 652h1v1h-1zM637 652h1v1h-1zM656 652h1v1h-1zM674 652h1v1h-1zM693 652h1v1h-1zM711 652h1v1h-1zM730 652h1v1h-1zM749 652h1v1h-1zM767 652h1v1h-1zM786 652h1v1h-1zM804 652h1v1h-1zM823 652h1v1h-1zM841 652h1v1h-1zM860 652h1v1h-1zM879 652h1v1h-1zM897 652h1v1h-1zM916 652h1v1h-1zM934 652h1v1h-1zM953 652h1v1h-1zM972 652h1v1h-1zM990 652h1v1h-1zM1009 652h1v1h-1zM1027 652h1v1h-1zM1046 652h1v1h-1zM1064 652h1v1h-1zM1083 652h1v1h-1zM1102 652h1v1h-1zM1120 652h1v1h-1zM1139 652h1v1h-1zM1157 652h1v1h-1zM1176 652h1v1h-1zM1195 652h1v1h-1zM1213 652h1v1h-1zM1232 652h1v1h-1zM1250 652h1v1h-1zM1269 652h1v1h-1zM1287 652h1v1h-1zM1306 652h1v1h-1zM1325 652h1v1h-1zM1343 652h1v1h-1zM1362 652h1v1h-1zM1380 652h1v1h-1zM1399 652h1v1h-1zM284 671h1v1h-1zM303 671h1v1h-1zM321 671h1v1h-1zM340 671h1v1h-1zM358 671h1v1h-1zM377 671h1v1h-1zM395 671h1v1h-1zM414 671h1v1h-1zM433 671h1v1h-1zM451 671h1v1h-1zM470 671h1v1h-1zM488 671h1v1h-1zM507 671h1v1h-1zM526 671h1v1h-1zM544 671h1v1h-1zM563 671h1v1h-1zM581 671h1v1h-1zM600 671h1v1h-1zM618 671h1v1h-1zM637 671h1v1h-1zM656 671h1v1h-1zM674 671h1v1h-1zM693 671h1v1h-1zM711 671h1v1h-1zM730 671h1v1h-1zM749 671h1v1h-1zM767 671h1v1h-1zM786 671h1v1h-1zM804 671h1v1h-1zM823 671h1v1h-1zM841 671h1v1h-1zM860 671h1v1h-1zM879 671h1v1h-1zM897 671h1v1h-1zM916 671h1v1h-1zM934 671h1v1h-1zM953 671h1v1h-1zM972 671h1v1h-1zM990 671h1v1h-1zM1009 671h1v1h-1zM1027 671h1v1h-1zM1046 671h1v1h-1zM1064 671h1v1h-1zM1083 671h1v1h-1zM1102 671h1v1h-1zM1120 671h1v1h-1zM1139 671h1v1h-1zM1157 671h1v1h-1zM1176 671h1v1h-1zM1195 671h1v1h-1zM1213 671h1v1h-1zM1232 671h1v1h-1zM1250 671h1v1h-1zM1269 671h1v1h-1zM1287 671h1v1h-1zM1306 671h1v1h-1zM1325 671h1v1h-1zM1343 671h1v1h-1zM1362 671h1v1h-1zM1380 671h1v1h-1zM1399 671h1v1h-1zM284 689h1v1h-1zM303 689h1v1h-1zM321 689h1v1h-1zM340 689h1v1h-1zM358 689h1v1h-1zM377 689h1v1h-1zM395 689h1v1h-1zM414 689h1v1h-1zM433 689h1v1h-1zM451 689h1v1h-1zM470 689h1v1h-1zM488 689h1v1h-1zM507 689h1v1h-1zM526 689h1v1h-1zM544 689h1v1h-1zM563 689h1v1h-1zM581 689h1v1h-1zM600 689h1v1h-1zM618 689h1v1h-1zM637 689h1v1h-1zM656 689h1v1h-1zM674 689h1v1h-1zM693 689h1v1h-1zM711 689h1v1h-1zM730 689h1v1h-1zM749 689h1v1h-1zM767 689h1v1h-1zM786 689h1v1h-1zM804 689h1v1h-1zM823 689h1v1h-1zM841 689h1v1h-1zM860 689h1v1h-1zM879 689h1v1h-1zM897 689h1v1h-1zM916 689h1v1h-1zM934 689h1v1h-1zM953 689h1v1h-1zM972 689h1v1h-1zM990 689h1v1h-1zM1009 689h1v1h-1zM1027 689h1v1h-1zM1046 689h1v1h-1zM1064 689h1v1h-1zM1083 689h1v1h-1zM1102 689h1v1h-1zM1120 689h1v1h-1zM1139 689h1v1h-1zM1157 689h1v1h-1zM1176 689h1v1h-1zM1195 689h1v1h-1zM1213 689h1v1h-1zM1232 689h1v1h-1zM1250 689h1v1h-1zM1269 689h1v1h-1zM1287 689h1v1h-1zM1306 689h1v1h-1zM1325 689h1v1h-1zM1343 689h1v1h-1zM1362 689h1v1h-1zM1380 689h1v1h-1zM1399 689h1v1h-1zM284 708h1v1h-1zM303 708h1v1h-1zM321 708h1v1h-1zM340 708h1v1h-1zM358 708h1v1h-1zM377 708h1v1h-1zM395 708h1v1h-1zM414 708h1v1h-1zM433 708h1v1h-1zM451 708h1v1h-1zM470 708h1v1h-1zM488 708h1v1h-1zM507 708h1v1h-1zM526 708h1v1h-1zM544 708h1v1h-1zM563 708h1v1h-1zM581 708h1v1h-1zM600 708h1v1h-1zM618 708h1v1h-1zM637 708h1v1h-1zM656 708h1v1h-1zM674 708h1v1h-1zM693 708h1v1h-1zM711 708h1v1h-1zM730 708h1v1h-1zM749 708h1v1h-1zM767 708h1v1h-1zM786 708h1v1h-1zM804 708h1v1h-1zM823 708h1v1h-1zM841 708h1v1h-1zM860 708h1v1h-1zM879 708h1v1h-1zM897 708h1v1h-1zM916 708h1v1h-1zM934 708h1v1h-1zM953 708h1v1h-1zM972 708h1v1h-1zM990 708h1v1h-1zM1009 708h1v1h-1zM1027 708h1v1h-1zM1046 708h1v1h-1zM1064 708h1v1h-1zM1083 708h1v1h-1zM1102 708h1v1h-1zM1120 708h1v1h-1zM1139 708h1v1h-1zM1157 708h1v1h-1zM1176 708h1v1h-1zM1195 708h1v1h-1zM1213 708h1v1h-1zM1232 708h1v1h-1zM1250 708h1v1h-1zM1269 708h1v1h-1zM1287 708h1v1h-1zM1306 708h1v1h-1zM1325 708h1v1h-1zM1343 708h1v1h-1zM1362 708h1v1h-1zM1380 708h1v1h-1zM1399 708h1v1h-1zM284 726h1v1h-1zM303 726h1v1h-1zM321 726h1v1h-1zM340 726h1v1h-1zM358 726h1v1h-1zM377 726h1v1h-1zM395 726h1v1h-1zM414 726h1v1h-1zM433 726h1v1h-1zM451 726h1v1h-1zM470 726h1v1h-1zM488 726h1v1h-1zM507 726h1v1h-1zM526 726h1v1h-1zM544 726h1v1h-1zM563 726h1v1h-1zM581 726h1v1h-1zM600 726h1v1h-1zM618 726h1v1h-1zM637 726h1v1h-1zM656 726h1v1h-1zM674 726h1v1h-1zM693 726h1v1h-1zM711 726h1v1h-1zM730 726h1v1h-1zM749 726h1v1h-1zM767 726h1v1h-1zM786 726h1v1h-1zM804 726h1v1h-1zM823 726h1v1h-1zM841 726h1v1h-1zM860 726h1v1h-1zM879 726h1v1h-1zM897 726h1v1h-1zM916 726h1v1h-1zM934 726h1v1h-1zM953 726h1v1h-1zM972 726h1v1h-1zM990 726h1v1h-1zM1009 726h1v1h-1zM1027 726h1v1h-1zM1046 726h1v1h-1zM1064 726h1v1h-1zM1083 726h1v1h-1zM1102 726h1v1h-1zM1120 726h1v1h-1zM1139 726h1v1h-1zM1157 726h1v1h-1zM1176 726h1v1h-1zM1195 726h1v1h-1zM1213 726h1v1h-1zM1232 726h1v1h-1zM1250 726h1v1h-1zM1269 726h1v1h-1zM1287 726h1v1h-1zM1306 726h1v1h-1zM1325 726h1v1h-1zM1343 726h1v1h-1zM1362 726h1v1h-1zM1380 726h1v1h-1zM1399 726h1v1h-1zM284 745h1v1h-1zM303 745h1v1h-1zM321 745h1v1h-1zM340 745h1v1h-1zM358 745h1v1h-1zM377 745h1v1h-1zM395 745h1v1h-1zM414 745h1v1h-1zM433 745h1v1h-1zM451 745h1v1h-1zM470 745h1v1h-1zM488 745h1v1h-1zM507 745h1v1h-1zM526 745h1v1h-1zM544 745h1v1h-1zM563 745h1v1h-1zM581 745h1v1h-1zM600 745h1v1h-1zM618 745h1v1h-1zM637 745h1v1h-1zM656 745h1v1h-1zM674 745h1v1h-1zM693 745h1v1h-1zM711 745h1v1h-1zM730 745h1v1h-1zM749 745h1v1h-1zM767 745h1v1h-1zM786 745h1v1h-1zM804 745h1v1h-1zM823 745h1v1h-1zM841 745h1v1h-1zM860 745h1v1h-1zM879 745h1v1h-1zM897 745h1v1h-1zM916 745h1v1h-1zM934 745h1v1h-1zM953 745h1v1h-1zM972 745h1v1h-1zM990 745h1v1h-1zM1009 745h1v1h-1zM1027 745h1v1h-1zM1046 745h1v1h-1zM1064 745h1v1h-1zM1083 745h1v1h-1zM1102 745h1v1h-1zM1120 745h1v1h-1zM1139 745h1v1h-1zM1157 745h1v1h-1zM1176 745h1v1h-1zM1195 745h1v1h-1zM1213 745h1v1h-1zM1232 745h1v1h-1zM1250 745h1v1h-1zM1269 745h1v1h-1zM1287 745h1v1h-1zM1306 745h1v1h-1zM1325 745h1v1h-1zM1343 745h1v1h-1zM1362 745h1v1h-1zM1380 745h1v1h-1zM1399 745h1v1h-1zM284 764h1v1h-1zM303 764h1v1h-1zM321 764h1v1h-1zM340 764h1v1h-1zM358 764h1v1h-1zM377 764h1v1h-1zM395 764h1v1h-1zM414 764h1v1h-1zM433 764h1v1h-1zM451 764h1v1h-1zM470 764h1v1h-1zM488 764h1v1h-1zM507 764h1v1h-1zM526 764h1v1h-1zM544 764h1v1h-1zM563 764h1v1h-1zM581 764h1v1h-1zM600 764h1v1h-1zM618 764h1v1h-1zM637 764h1v1h-1zM656 764h1v1h-1zM674 764h1v1h-1zM693 764h1v1h-1zM711 764h1v1h-1zM730 764h1v1h-1zM749 764h1v1h-1zM767 764h1v1h-1zM786 764h1v1h-1zM804 764h1v1h-1zM823 764h1v1h-1zM841 764h1v1h-1zM860 764h1v1h-1zM879 764h1v1h-1zM897 764h1v1h-1zM916 764h1v1h-1zM934 764h1v1h-1zM953 764h1v1h-1zM972 764h1v1h-1zM990 764h1v1h-1zM1009 764h1v1h-1zM1027 764h1v1h-1zM1046 764h1v1h-1zM1064 764h1v1h-1zM1083 764h1v1h-1zM1102 764h1v1h-1zM1120 764h1v1h-1zM1139 764h1v1h-1zM1157 764h1v1h-1zM1176 764h1v1h-1zM1195 764h1v1h-1zM1213 764h1v1h-1zM1232 764h1v1h-1zM1250 764h1v1h-1zM1269 764h1v1h-1zM1287 764h1v1h-1zM1306 764h1v1h-1zM1325 764h1v1h-1zM1343 764h1v1h-1zM1362 764h1v1h-1zM1380 764h1v1h-1zM1399 764h1v1h-1zM284 782h1v1h-1zM303 782h1v1h-1zM321 782h1v1h-1zM340 782h1v1h-1zM358 782h1v1h-1zM377 782h1v1h-1zM395 782h1v1h-1zM414 782h1v1h-1zM433 782h1v1h-1zM451 782h1v1h-1zM470 782h1v1h-1zM488 782h1v1h-1zM507 782h1v1h-1zM526 782h1v1h-1zM544 782h1v1h-1zM563 782h1v1h-1zM581 782h1v1h-1zM600 782h1v1h-1zM618 782h1v1h-1zM637 782h1v1h-1zM656 782h1v1h-1zM674 782h1v1h-1zM693 782h1v1h-1zM711 782h1v1h-1zM730 782h1v1h-1zM749 782h1v1h-1zM767 782h1v1h-1zM786 782h1v1h-1zM804 782h1v1h-1zM823 782h1v1h-1zM841 782h1v1h-1zM860 782h1v1h-1zM879 782h1v1h-1zM897 782h1v1h-1zM916 782h1v1h-1zM934 782h1v1h-1zM953 782h1v1h-1zM972 782h1v1h-1zM990 782h1v1h-1zM1009 782h1v1h-1zM1027 782h1v1h-1zM1046 782h1v1h-1zM1064 782h1v1h-1zM1083 782h1v1h-1zM1102 782h1v1h-1zM1120 782h1v1h-1zM1139 782h1v1h-1zM1157 782h1v1h-1zM1176 782h1v1h-1zM1195 782h1v1h-1zM1213 782h1v1h-1zM1232 782h1v1h-1zM1250 782h1v1h-1zM1269 782h1v1h-1zM1287 782h1v1h-1zM1306 782h1v1h-1zM1325 782h1v1h-1zM1343 782h1v1h-1zM1362 782h1v1h-1zM1380 782h1v1h-1zM1399 782h1v1h-1z" fill="#000"/></svg><svg style="left:0;top:0" width="1407" height="786"><path d="M377 225 V197 H730 V225" stroke="#000080" stroke-width="2.6" fill="none"/><circle cx="433" cy="197.3" r="2.8" fill="#000080"/><circle cx="526" cy="197.3" r="2.8" fill="#000080"/><circle cx="646" cy="197.3" r="2.8" fill="#000080"/><path d="M452 197.3 H464 A5.25 4.9875 0 0 1 474.5 197.3 A5.25 4.9875 0 0 1 485.0 197.3 A5.25 4.9875 0 0 1 495.5 197.3 H507.5" stroke="#000080" stroke-width="2.6" fill="none"/><rect x="448.5" y="194.8" width="5" height="5" fill="#000080"/><rect x="504.5" y="194.8" width="5" height="5" fill="#000080"/><path d="M554.5 197.3 H566.5 A5.166666666666667 4.908333333333333 0 0 1 576.8333333333334 197.3 A5.166666666666667 4.908333333333333 0 0 1 587.1666666666666 197.3 A5.166666666666667 4.908333333333333 0 0 1 597.5 197.3 H609.5" stroke="#000080" stroke-width="2.6" fill="none"/><rect x="551.5" y="194.8" width="5" height="5" fill="#000080"/><rect x="606.5" y="194.8" width="5" height="5" fill="#000080"/><path d="M433 197 V231 M433 238 V271" stroke="#000080" stroke-width="2.6" fill="none"/><rect x="430.75" y="204.5" width="4.5" height="5" fill="#000080"/><rect x="430.75" y="259.5" width="4.5" height="5" fill="#000080"/><rect x="422.5" y="229" width="21" height="4" fill="#000080"/><rect x="422.5" y="236" width="21" height="4" fill="#000080"/><rect x="422.5" y="270" width="21" height="3.5" fill="#000080"/><rect x="426" y="275.8" width="14" height="3.4" fill="#000080"/><rect x="430" y="281.5" width="6" height="3" fill="#000080"/><path d="M525.5 197 V231 M525.5 238 V271" stroke="#000080" stroke-width="2.6" fill="none"/><rect x="523.25" y="204.5" width="4.5" height="5" fill="#000080"/><rect x="523.25" y="259.5" width="4.5" height="5" fill="#000080"/><rect x="515.0" y="229" width="21" height="4" fill="#000080"/><rect x="515.0" y="236" width="21" height="4" fill="#000080"/><rect x="515.0" y="270" width="21" height="3.5" fill="#000080"/><rect x="518.5" y="275.8" width="14" height="3.4" fill="#000080"/><rect x="522.5" y="281.5" width="6" height="3" fill="#000080"/><path d="M646 197 V231 M646 238 V271" stroke="#000080" stroke-width="2.6" fill="none"/><rect x="643.75" y="204.5" width="4.5" height="5" fill="#000080"/><rect x="643.75" y="259.5" width="4.5" height="5" fill="#000080"/><rect x="635.5" y="229" width="21" height="4" fill="#000080"/><rect x="635.5" y="236" width="21" height="4" fill="#000080"/><rect x="635.5" y="270" width="21" height="3.5" fill="#000080"/><rect x="639" y="275.8" width="14" height="3.4" fill="#000080"/><rect x="643" y="281.5" width="6" height="3" fill="#000080"/><path d="M377 224 V235 M377 250 V254.5 M377 271 V290" stroke="#000080" stroke-width="2.6" fill="none"/><rect x="374.5" y="222.05" width="5" height="5.5" fill="#000080"/><rect x="374.5" y="278.25" width="5" height="5.5" fill="#000080"/><rect x="367.4" y="232.3" width="19.9" height="41" fill="none" stroke="#9A9A9A" stroke-width="1"/><rect x="371.7" y="235" width="10.6" height="15" fill="none" stroke="#000080" stroke-width="2.2"/><circle cx="377" cy="262.6" r="8" fill="none" stroke="#000080" stroke-width="2.2"/><path d="M372 263 Q374.5 259 377 262.6 Q379.5 266 382 262" stroke="#000080" stroke-width="1.5" fill="none"/><path d="M381.3 230 H388 M384.65 226.7 V233.3" stroke="#FF0000" stroke-width="1.25"/><path d="M382 276.5 H387" stroke="#000" stroke-width="1.1"/><rect x="366.5" y="289" width="21" height="3.5" fill="#000080"/><rect x="370" y="294.8" width="14" height="3.4" fill="#000080"/><rect x="374" y="300.3" width="6" height="3" fill="#000080"/><path d="M730 224 V235 M730 250 V254.5 M730 271 V290" stroke="#000080" stroke-width="2.6" fill="none"/><rect x="727.5" y="222.05" width="5" height="5.5" fill="#000080"/><rect x="727.5" y="278.25" width="5" height="5.5" fill="#000080"/><rect x="720.4" y="232.3" width="19.9" height="41" fill="none" stroke="#9A9A9A" stroke-width="1"/><rect x="724.7" y="235" width="10.6" height="15" fill="none" stroke="#000080" stroke-width="2.2"/><circle cx="730" cy="262.6" r="8" fill="none" stroke="#000080" stroke-width="2.2"/><path d="M725 263 Q727.5 259 730 262.6 Q732.5 266 735 262" stroke="#000080" stroke-width="1.5" fill="none"/><path d="M734.3 230 H741 M737.65 226.7 V233.3" stroke="#FF0000" stroke-width="1.25"/><path d="M735 276.5 H740" stroke="#000" stroke-width="1.1"/><rect x="719.5" y="289" width="21" height="3.5" fill="#000080"/><rect x="723" y="294.8" width="14" height="3.4" fill="#000080"/><rect x="727" y="300.3" width="6" height="3" fill="#000080"/></svg><div class="t" style="left:297.0px;top:225.6px;font-size:14.6px;color:#000">P1</div><div class="t" style="left:297.0px;top:245.6px;font-size:14.6px;color:#000">Num=1</div><div class="t" style="left:297.0px;top:265.6px;font-size:14.6px;color:#000">Z=50 Ohm</div><div class="t" style="left:746.5px;top:230.1px;font-size:14.6px;color:#000">P2</div><div class="t" style="left:746.5px;top:250.1px;font-size:14.6px;color:#000">Num=2</div><div class="t" style="left:746.5px;top:270.1px;font-size:14.6px;color:#000">Z=50 Ohm</div><div class="t" style="left:463.0px;top:158.8px;font-size:14.6px;color:#000">L1</div><div class="t" style="left:463.0px;top:178.6px;font-size:14.6px;color:#000">L=L1</div><div class="t" style="left:568.5px;top:155.6px;font-size:14.6px;color:#000">L2</div><div class="t" style="left:568.5px;top:175.6px;font-size:14.6px;color:#000">L=L2</div><div class="t" style="left:447.0px;top:225.6px;font-size:14.6px;color:#000">C2</div><div class="t" style="left:447.0px;top:245.4px;font-size:14.6px;color:#000">C=C2</div><div class="t" style="left:547.5px;top:222.1px;font-size:14.6px;color:#000">C4</div><div class="t" style="left:547.5px;top:241.9px;font-size:14.6px;color:#000">C=C1</div><div class="t" style="left:662.8px;top:223.9px;font-size:14.6px;color:#000">C3</div><div class="t" style="left:662.8px;top:243.8px;font-size:14.6px;color:#000">C=C2</div><div class="t" style="left:684.3px;top:134.2px;font-size:19.8px;color:#000;letter-spacing:-0.036px">FilterOpt1.sch Simple Low-Pass Filter Optimization Example</div><svg style="left:0;top:0" width="1407" height="786"><path d="M817.5 173.8 H961 L965.5 178.5 V237 H822 L817.5 232.5 Z" fill="none" stroke="#000080" stroke-width="2.8" stroke-linejoin="miter"/><path d="M817.5 232.5 H961 V173.8 M961 232.5 L965.5 237" fill="none" stroke="#000080" stroke-width="2.8"/></svg><div class="t" style="left:824.6px;top:181.8px;font-size:19px;color:#000080;font-weight:bold;letter-spacing:0.084px">symulacja</div><div class="t" style="left:823.6px;top:206.8px;font-size:19px;color:#000080;font-weight:bold;letter-spacing:0.502px">parametrów S</div><div class="t" style="left:822.5px;top:243.4px;font-size:14.6px;color:#000">SP1</div><div class="t" style="left:822.5px;top:263.4px;font-size:14.6px;color:#000">Type=lin</div><div class="t" style="left:822.5px;top:283.4px;font-size:14.6px;color:#000">Start=2 MHz</div><div class="t" style="left:822.5px;top:303.4px;font-size:14.6px;color:#000">Stop=30 MHz</div><div class="t" style="left:822.5px;top:323.4px;font-size:14.6px;color:#000">Points=100</div><svg style="left:0;top:0" width="1407" height="786"><path d="M364 356.5 V372.5 H431" fill="none" stroke="#000080" stroke-width="2.2"/></svg><div class="t" style="left:367.0px;top:354.8px;font-size:14.3px;color:#000">Równanie</div><div class="t" style="left:367.0px;top:379.1px;font-size:14.6px;color:#000">Eqn1</div><div class="t" style="left:367.0px;top:398.9px;font-size:14.6px;color:#000">dB_S21=dB(S[2,1])</div><div class="t" style="left:367.0px;top:418.6px;font-size:14.6px;color:#000">dB_S12=dB(S[1,2])</div><div class="t" style="left:367.0px;top:438.4px;font-size:14.6px;color:#000">dB_S22=dB(S[2,2])</div><div class="t" style="left:367.0px;top:458.1px;font-size:14.6px;color:#000">dB_S11=dB(S[1,1])</div><svg style="left:0;top:0" width="1407" height="786"><path d="M503 356.7 V372.7 H570" fill="none" stroke="#000080" stroke-width="2.2"/></svg><div class="t" style="left:506.0px;top:355.0px;font-size:14.3px;color:#000">Równanie</div><div class="t" style="left:513.5px;top:380.1px;font-size:14.6px;color:#000">Eqn2</div><div class="t" style="left:513.5px;top:400.4px;font-size:14.6px;color:#000">PassBandS21=min(dB(S[2,1]),5e6:14e6)</div><div class="t" style="left:513.5px;top:420.2px;font-size:14.6px;color:#000">PassBandS11=max(dB(S[1,1]),5e6:14e6)</div><div class="t" style="left:513.5px;top:440.3px;font-size:14.6px;color:#000">RejBandS21=max(dB(S[2,1]),20e6:30e6)</div><svg style="left:0;top:0" width="1407" height="786"><path d="M819.5 384.5 V400.5 H885.5" fill="none" stroke="#000080" stroke-width="2.2"/></svg><div class="t" style="left:822.5px;top:382.8px;font-size:14.3px;color:#000">Równanie</div><div class="t" style="left:831.5px;top:407.8px;font-size:14.6px;color:#000">Eqn4</div><div class="t" style="left:831.5px;top:427.1px;font-size:14.6px;color:#000">C2=100E-12</div><div class="t" style="left:831.5px;top:447.1px;font-size:14.6px;color:#000">C1=100E-12</div><div class="t" style="left:831.5px;top:467.1px;font-size:14.6px;color:#000">L1=560E-9</div><div class="t" style="left:831.5px;top:487.2px;font-size:14.6px;color:#000">L2=560E-9</div><svg style="left:0;top:0" width="1407" height="786"><rect x="565.8" y="501.6" width="155" height="44.5" rx="8" fill="none" stroke="#8A8A8A" stroke-width="2.8"/><path d="M569.5 505.5 H712 V537 H569.5 Z" fill="none" stroke="#000080" stroke-width="2.2"/><path d="M712 505.5 Q717.5 505.5 717.5 512 V542.5 H577 Q569.5 542.5 569.5 537" fill="none" stroke="#000080" stroke-width="2.2"/></svg><div class="t" style="left:577.0px;top:510.4px;font-size:20.5px;color:#000080;font-weight:bold;letter-spacing:-0.639px">Optymalizacja</div><div class="t" style="left:575.0px;top:549.3px;font-size:14px;color:#000">Opt1</div><svg style="left:0;top:0" width="1407" height="786"><path d="M1097.5 179.6 V453.2" stroke="#C0C0C0" stroke-width="1.3"/><path d="M1169.6 179.6 V453.2" stroke="#C0C0C0" stroke-width="1.3"/><path d="M1241.6 179.6 V453.2" stroke="#C0C0C0" stroke-width="1.3"/><path d="M1313.6 179.6 V453.2" stroke="#C0C0C0" stroke-width="1.3"/><path d="M1025 202.4 H1361.6" stroke="#C0C0C0" stroke-width="1.3"/><path d="M1025 273.5 H1361.6" stroke="#C0C0C0" stroke-width="1.3"/><path d="M1025 344.3 H1361.6" stroke="#C0C0C0" stroke-width="1.3"/><path d="M1025 415.3 H1361.6" stroke="#C0C0C0" stroke-width="1.3"/><path d="M1024.5 202.3 L1035.9 204.2 L1047.3 205.4 L1070.0 205.0 L1081.4 203.7 L1095.1 201.4 L1105.3 200.5 L1117.8 200.8 L1132.6 203.4 L1145.1 205.4 L1157.7 205.4 L1169.0 202.7 L1176.5 200.6 L1182.9 200.6 L1188.0 203.5 L1193.1 210.5 L1196.9 217.5 L1202.0 228.3 L1208.3 241.1 L1216.0 256.3 L1224.3 272.5 L1230.8 282.7 L1241.6 298.9 L1252.4 315.1 L1267.5 334.6 L1284.8 352.9 L1312.9 378.9 L1334.5 397.2 L1349.7 408.0 L1361.6 416.7" stroke="#FF0000" stroke-width="1.15" fill="none" stroke-linejoin="round"/><path d="M1024.6 278.7 L1030.2 270.0 L1035.3 262.9 L1042.9 256.5 L1053.1 252.7 L1064.5 252.2 L1073.4 255.8 L1081.1 261.6 L1087.4 270.5 L1092.5 282.0 L1096.8 294.7 L1100.9 311.2 L1104.0 326.5 L1106.5 359.6 L1108.5 405.4 L1109.6 429.6 L1113.4 418.1 L1114.6 387.6 L1116.4 352.0 L1118.9 326.5 L1122.2 306.2 L1126.5 288.3 L1132.9 270.5 L1140.5 259.1 L1150.7 252.2 L1158.3 253.2 L1164.7 259.1 L1169.0 269.3 L1172.3 284.5 L1174.9 308.7 L1176.7 331.6 L1177.4 354.5 L1178.2 364.7 L1181.2 364.7 L1182.5 346.9 L1183.8 303.6 L1185.8 273.1 L1188.0 258.9 L1190.5 241.1 L1193.7 228.3 L1198.2 216.9 L1203.3 210.5 L1210.9 206.1 L1223.6 202.9 L1260.0 202.3 L1361.6 201.2" stroke="#0000FF" stroke-width="1.15" fill="none" stroke-linejoin="round"/><rect x="1025" y="179.6" width="336.5999999999999" height="273.6" fill="none" stroke="#000" stroke-width="1.4"/><path d="M1019.5 202.4 H1030" stroke="#000" stroke-width="1.5"/><path d="M1019.5 273.5 H1030" stroke="#000" stroke-width="1.5"/><path d="M1019.5 344.3 H1030" stroke="#000" stroke-width="1.5"/><path d="M1019.5 415.3 H1030" stroke="#000" stroke-width="1.5"/><path d="M1356.6 200.5 H1367.1" stroke="#000" stroke-width="1.5"/><path d="M1356.6 251.5 H1367.1" stroke="#000" stroke-width="1.5"/><path d="M1356.6 301.2 H1367.1" stroke="#000" stroke-width="1.5"/><path d="M1356.6 351.4 H1367.1" stroke="#000" stroke-width="1.5"/><path d="M1356.6 402.2 H1367.1" stroke="#000" stroke-width="1.5"/><path d="M1356.6 452.3 H1367.1" stroke="#000" stroke-width="1.5"/><path d="M1097.5 447.2 V453.2" stroke="#000" stroke-width="1.5"/><path d="M1169.6 447.2 V453.2" stroke="#000" stroke-width="1.5"/><path d="M1241.6 447.2 V453.2" stroke="#000" stroke-width="1.5"/><path d="M1313.6 447.2 V453.2" stroke="#000" stroke-width="1.5"/></svg><div class="t" style="left:816.3px;width:200px;text-align:right;top:195.0px;font-size:13.6px;color:#000">0</div><div class="t" style="left:816.3px;width:200px;text-align:right;top:266.1px;font-size:13.6px;color:#000">-10</div><div class="t" style="left:816.3px;width:200px;text-align:right;top:337.4px;font-size:13.6px;color:#000">-20</div><div class="t" style="left:816.3px;width:200px;text-align:right;top:408.2px;font-size:13.6px;color:#000">-30</div><div class="t" style="left:1367.2px;top:193.2px;font-size:13.6px;color:#000">0</div><div class="t" style="left:1367.2px;top:244.2px;font-size:13.6px;color:#000">-10</div><div class="t" style="left:1367.2px;top:294.0px;font-size:13.6px;color:#000">-20</div><div class="t" style="left:1367.2px;top:343.9px;font-size:13.6px;color:#000">-30</div><div class="t" style="left:1367.2px;top:394.8px;font-size:13.6px;color:#000">-40</div><div class="t" style="left:1367.2px;top:446.0px;font-size:13.6px;color:#000">-50</div><div class="t" style="left:923px;width:200px;text-align:center;top:456.9px;font-size:13.6px;color:#000">2e06</div><div class="t" style="left:995.2px;width:200px;text-align:center;top:456.9px;font-size:13.6px;color:#000">8e06</div><div class="t" style="left:1068.3px;width:200px;text-align:center;top:456.9px;font-size:13.6px;color:#000">1.4e07</div><div class="t" style="left:1138.7px;width:200px;text-align:center;top:456.9px;font-size:13.6px;color:#000">2e07</div><div class="t" style="left:1211.8px;width:200px;text-align:center;top:456.9px;font-size:13.6px;color:#000">2.6e07</div><div class="t" style="left:1160.9px;top:476.0px;font-size:14.8px;color:#0000FF;letter-spacing:-0.198px">frequency</div><div class="t" style="left:1160.9px;top:496.9px;font-size:14.8px;color:#FF0000;letter-spacing:-0.198px">frequency</div><div class="t" style="left:983.5px;top:318px;font-size:15px;color:#0000FF;transform:translate(-50%,-50%) rotate(-90deg)">dB_S11</div><div class="t" style="left:1399.5px;top:314px;font-size:15px;color:#FF0000;transform:translate(-50%,-50%) rotate(90deg)">dB_S21</div><div class="r" style="left:913px;top:537px;width:425px;height:259px;border-radius:7px 7px 0 0;background:linear-gradient(to bottom,#0A5FE8 0px,#3D95FF 2px,#0D6AF6 5px,#0058EE 10px,#0053E4 20px,#0050DD 27px,#0046D0 30px,#0050E0 31px);"></div><div class="r" style="left:913px;top:567px;width:4px;height:230px;background:linear-gradient(to right,#0041C8,#0066FF 50%,#0055E8);"></div><div class="r" style="left:1333px;top:567px;width:5px;height:230px;background:linear-gradient(to right,#0055E8,#0066FF 50%,#0030B0);"></div><div class="r" style="left:917px;top:567px;width:417px;height:230px;background:#ECE9D8;"></div><svg style="left:918px;top:544px" width="18" height="17" viewBox="0 0 18 17">
<path d="M2 13 L6 9" stroke="#E8ECF8" stroke-width="1"/>
<path d="M10.5 4.5 L15.5 6" stroke="#F0F0F8" stroke-width="1.5"/>
<ellipse cx="8" cy="8" rx="4.6" ry="3.6" fill="#15152a" transform="rotate(-35 8 8)"/>
<path d="M5 12 Q7 15 8.5 14" stroke="#E8ECF8" stroke-width="1.3" fill="none"/>
<circle cx="16.5" cy="6" r="0.9" fill="#fff"/>
</svg><div class="t" style="left:939.6px;top:547.9px;font-size:14.2px;color:#0A2070;font-weight:bold;letter-spacing:-0.508px">Podaj parametry do optymalizacji</div><div class="t" style="left:938.6px;top:546.9px;font-size:14.2px;color:#FFFFFF;font-weight:bold;letter-spacing:-0.508px">Podaj parametry do optymalizacji</div><svg style="left:1288px;top:543px" width="22" height="22" viewBox="0 0 22 22">
<defs><radialGradient id="hbg" cx="0.3" cy="0.25" r="0.95"><stop offset="0" stop-color="#9EC0FF"/><stop offset="0.5" stop-color="#3A80F8"/><stop offset="1" stop-color="#1050D8"/></radialGradient></defs>
<rect x="0.8" y="0.8" width="19.4" height="19.8" rx="3" fill="url(#hbg)" stroke="#FFFFFF" stroke-width="1.2"/>
<text x="10.5" y="16.5" text-anchor="middle" font-family="Liberation Sans" font-weight="bold" font-size="16" fill="#FFFFFF">?</text></svg><svg style="left:1311px;top:543px" width="22" height="22" viewBox="0 0 22 22">
<defs><radialGradient id="cbg" cx="0.3" cy="0.25" r="0.95"><stop offset="0" stop-color="#F4A080"/><stop offset="0.5" stop-color="#E05A30"/><stop offset="1" stop-color="#C83A10"/></radialGradient></defs>
<rect x="0.8" y="0.8" width="19.6" height="19.8" rx="3" fill="url(#cbg)" stroke="#FFFFFF" stroke-width="1.2"/>
<path d="M5.5 5.5 L15.5 15.5 M15.5 5.5 L5.5 15.5" stroke="#FFFFFF" stroke-width="2.3"/></svg><div class="r" style="left:919px;top:594px;width:415px;height:200px;box-sizing:border-box;border-top:2px solid #FFFFFF;border-left:1px solid #FFFFFF;border-right:1px solid #ACA899;background:#ECE9D8"></div><div class="r" style="left:1328px;top:596px;width:4px;height:190px;background:#F4F3EE;"></div><div class="r" style="left:920px;top:570px;width:69px;height:24px;box-sizing:border-box;border-top:1px solid #FFFFFF;border-left:1px solid #FFFFFF;border-right:2px solid #ACA899;background:#ECE9D8"></div><div class="t" style="left:925.0px;top:573.3px;font-size:15.3px;color:#000">Ogólne</div><div class="r" style="left:989px;top:570px;width:82px;height:24px;box-sizing:border-box;border-top:1px solid #FFFFFF;border-left:1px solid #FFFFFF;border-right:2px solid #ACA899;background:#ECE9D8"></div><div class="t" style="left:997.0px;top:573.3px;font-size:15.3px;color:#000">Algorytm</div><div class="r" style="left:1153px;top:570px;width:53px;height:24px;box-sizing:border-box;border-top:1px solid #FFFFFF;border-left:1px solid #FFFFFF;border-right:2px solid #ACA899;background:#ECE9D8"></div><div class="t" style="left:1159.5px;top:573.3px;font-size:15.3px;color:#000">Cele</div><div class="r" style="left:1071px;top:567.5px;width:83px;height:28.5px;box-sizing:border-box;border-top:1px solid #FFFFFF;border-left:1px solid #FFFFFF;border-right:2px solid #716F64;background:#ECE9D8"></div><div class="t" style="left:1078.0px;top:573.2px;font-size:15.3px;color:#000">Zmienne</div><div class="r" style="left:922px;top:599px;width:406px;height:200px;box-sizing:border-box;border-top:1px solid #ACA899;border-left:1px solid #ACA899;background:#FFFFFF;box-shadow:inset 1px 1px 0 #716F64"></div><div class="r" style="left:0;top:0;width:1327px;height:786px;overflow:hidden"><div class="r" style="left:924px;top:601px;width:62px;height:27px;box-sizing:border-box;border-left:1px solid #FFFFFF;border-right:2px solid #ACA899;border-bottom:2px solid #ACA899;background:#ECE9D8;overflow:hidden"></div><div class="r" style="left:986px;top:601px;width:72.5px;height:27px;box-sizing:border-box;border-left:1px solid #FFFFFF;border-right:2px solid #ACA899;border-bottom:2px solid #ACA899;background:#ECE9D8;overflow:hidden"></div><div class="r" style="left:1058.5px;top:601px;width:112.0px;height:27px;box-sizing:border-box;border-left:1px solid #FFFFFF;border-right:2px solid #ACA899;border-bottom:2px solid #ACA899;background:#ECE9D8;overflow:hidden"></div><div class="r" style="left:1170.5px;top:601px;width:60.799999999999955px;height:27px;box-sizing:border-box;border-left:1px solid #FFFFFF;border-right:2px solid #ACA899;border-bottom:2px solid #ACA899;background:#ECE9D8;overflow:hidden"></div><div class="r" style="left:1231.3px;top:601px;width:70.10000000000014px;height:27px;box-sizing:border-box;border-left:1px solid #FFFFFF;border-right:2px solid #ACA899;border-bottom:2px solid #ACA899;background:#ECE9D8;overflow:hidden"></div><div class="r" style="left:1301.4px;top:601px;width:38.59999999999991px;height:27px;box-sizing:border-box;border-left:1px solid #FFFFFF;border-right:2px solid #ACA899;border-bottom:2px solid #ACA899;background:#ECE9D8;overflow:hidden"></div><div class="t" style="left:928.5px;top:606.5px;font-size:15.3px;color:#000">Nazwa</div><div class="t" style="left:990.5px;top:606.5px;font-size:15.3px;color:#000">aktywne</div><div class="t" style="left:1063.0px;top:606.5px;font-size:15.3px;color:#000">początkowe</div><div class="t" style="left:1175.0px;top:606.5px;font-size:15.3px;color:#000">min</div><div class="t" style="left:1235.8px;top:606.5px;font-size:15.3px;color:#000">maks</div><div class="t" style="left:1305.9px;top:606.5px;font-size:15.3px;color:#000">Typ</div><div class="t" style="left:924.5px;top:631.6px;font-size:15.8px;color:#000">L2</div><div class="t" style="left:987.5px;top:631.6px;font-size:15.8px;color:#000">nie</div><div class="t" style="left:1059.0px;top:631.6px;font-size:15.8px;color:#000">560e-9</div><div class="t" style="left:1172.3px;top:631.6px;font-size:15.8px;color:#000">1e-9</div><div class="t" style="left:1233.5px;top:631.6px;font-size:15.8px;color:#000">100e-9</div><div class="t" style="left:1302.6px;top:631.6px;font-size:15.8px;color:#000">poc</div><div class="t" style="left:924.5px;top:653.4px;font-size:15.8px;color:#000">C1</div><div class="t" style="left:987.5px;top:653.4px;font-size:15.8px;color:#000">tak</div><div class="t" style="left:1059.0px;top:653.4px;font-size:15.8px;color:#000">6.038359E-010</div><div class="t" style="left:1172.3px;top:653.4px;font-size:15.8px;color:#000">100e-12</div><div class="t" style="left:1233.5px;top:653.4px;font-size:15.8px;color:#000">1000e-12</div><div class="t" style="left:1302.6px;top:653.4px;font-size:15.8px;color:#000">poc</div><div class="t" style="left:924.5px;top:675.3px;font-size:15.8px;color:#000">L1</div><div class="t" style="left:987.5px;top:675.3px;font-size:15.8px;color:#000">nie</div><div class="t" style="left:1059.0px;top:675.3px;font-size:15.8px;color:#000">560e-9</div><div class="t" style="left:1172.3px;top:675.3px;font-size:15.8px;color:#000">1e-9</div><div class="t" style="left:1233.5px;top:675.3px;font-size:15.8px;color:#000">100e-9</div><div class="t" style="left:1302.6px;top:675.3px;font-size:15.8px;color:#000">poc</div><div class="t" style="left:924.5px;top:697.1px;font-size:15.8px;color:#000">C2</div><div class="t" style="left:987.5px;top:697.1px;font-size:15.8px;color:#000">tak</div><div class="t" style="left:1059.0px;top:697.1px;font-size:15.8px;color:#000">4.276976E-010</div><div class="t" style="left:1172.3px;top:697.1px;font-size:15.8px;color:#000">100e-12</div><div class="t" style="left:1233.5px;top:697.1px;font-size:15.8px;color:#000">1000e-12</div><div class="t" style="left:1302.6px;top:697.1px;font-size:15.8px;color:#000">poc</div></div><div class="r" style="left:923px;top:769px;width:404px;height:17px;background:#ECE9D8;"></div><div class="r" style="left:1236px;top:770px;width:74px;height:16px;background:repeating-conic-gradient(#FFFFFF 0 25%, #ECE9D8 0 50%) 0 0/2px 2px;"></div><div class="r" style="left:923px;top:769px;width:18px;height:17px;box-sizing:border-box;border-top:1px solid #FFFFFF;border-left:1px solid #FFFFFF;border-right:1px solid #716F64;background:#ECE9D8"></div><div class="r" style="left:941px;top:769px;width:295px;height:17px;box-sizing:border-box;border-top:1px solid #FFFFFF;border-left:1px solid #FFFFFF;border-right:2px solid #716F64;background:#ECE9D8"></div><div class="r" style="left:1310px;top:769px;width:17px;height:17px;box-sizing:border-box;border-top:1px solid #FFFFFF;border-left:1px solid #FFFFFF;border-right:1px solid #716F64;background:#ECE9D8"></div><svg style="left:923px;top:769px" width="404" height="17"><path d="M6 8.5 L10 4.5 V12.5 Z" fill="#000"/><path d="M397 8.5 L393 4.5 V12.5 Z" fill="#000"/></svg>
</body></html>
